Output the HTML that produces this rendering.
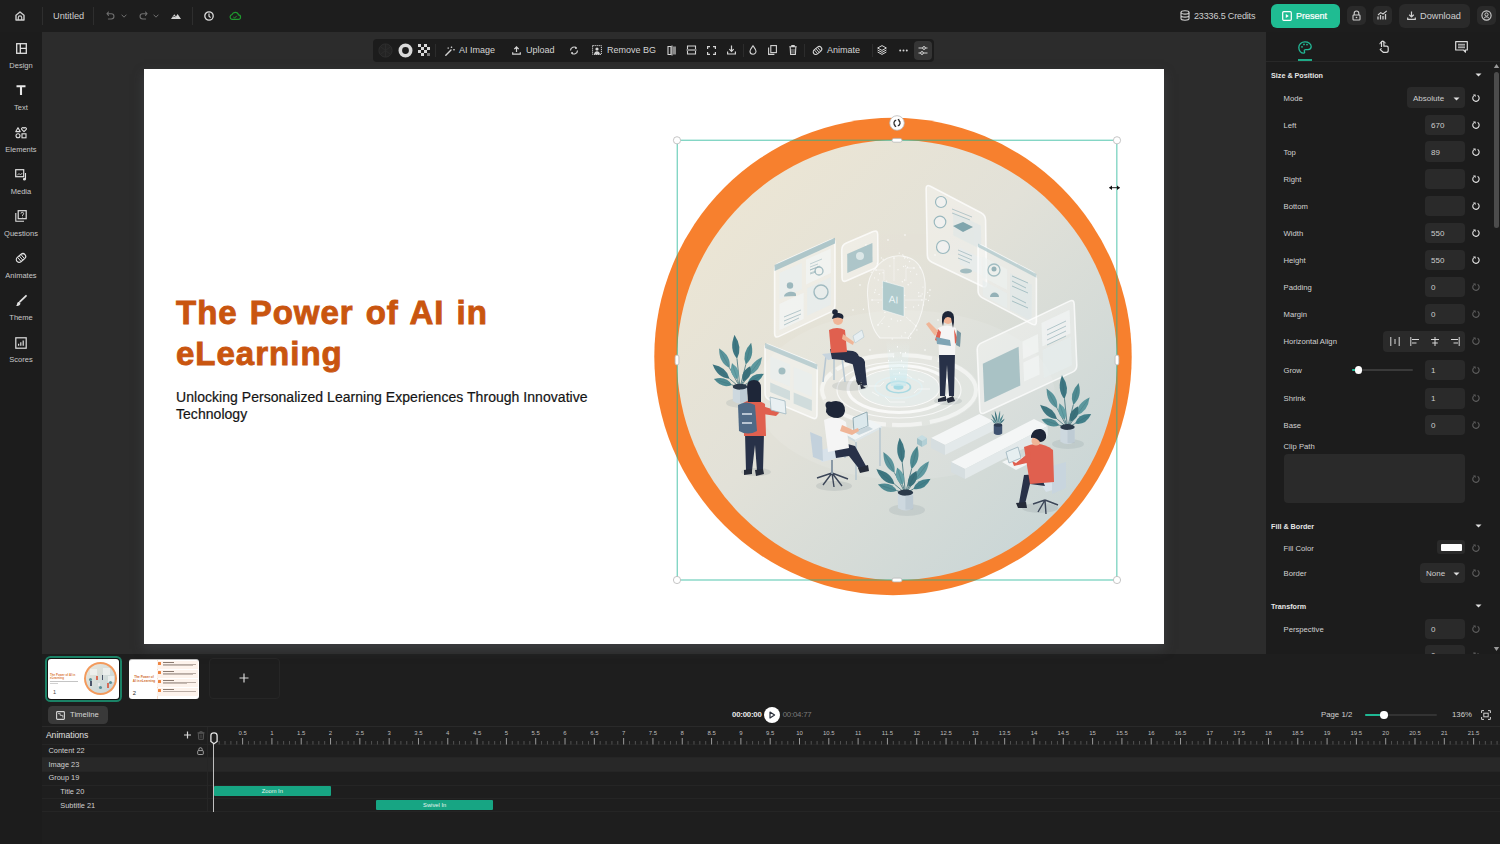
<!DOCTYPE html>
<html><head><meta charset="utf-8">
<style>
*{margin:0;padding:0;box-sizing:border-box}
html,body{width:1500px;height:844px;overflow:hidden;background:#1e1e1e;font-family:"Liberation Sans",sans-serif;color:#ddd}
.a{position:absolute}
.t{position:absolute;white-space:nowrap;line-height:1}
svg{position:absolute;overflow:visible}
#top{left:0;top:0;width:1500px;height:32px;background:#1d1d1d}
#side{left:0;top:32px;width:42px;height:812px;background:#1c1c1c}
#canvas{left:42px;top:32px;width:1224px;height:622px;background:#2c2c2c}
#rp{left:1266px;top:32px;width:234px;height:622px;background:#1c1c1c}
#bottom{left:42px;top:654px;width:1458px;height:190px;background:#1e1e1e}
.sep{position:absolute;width:1px;background:#2e2e2e}
.side-l{position:absolute;left:0;width:42px;text-align:center;font-size:7.5px;color:#c8c8c8;line-height:1}
.tbt{font-size:9px;color:#d4d4d4}
.rph{font-size:7.2px;font-weight:bold;color:#e6e6e6}
.rpl{font-size:7.7px;color:#d2d2d2}
.rpv{font-size:8px;color:#cdcdcd}
.ib{background:#2a2a2a;border-radius:4px}
</style></head><body>
<!-- TOP BAR -->
<div id="top" class="a"></div>

<!-- top bar items -->
<svg style="left:15px;top:11px" width="10" height="10" viewBox="0 0 10 10"><path d="M1 4.2L5 1 9 4.2V9H1Z" fill="none" stroke="#cfcfcf" stroke-width="1.4" stroke-linejoin="round"/><path d="M3.3 9V6.6a1.7 1.7 0 0 1 3.4 0V9" fill="none" stroke="#cfcfcf" stroke-width="1.2"/></svg>
<div class="sep" style="left:42px;top:7px;height:18px"></div>
<div class="t" style="left:53px;top:11.5px;font-size:9.2px;color:#cfcfcf">Untitled</div>
<div class="sep" style="left:93px;top:7px;height:18px"></div>
<svg style="left:106px;top:11px" width="9" height="9" viewBox="0 0 9 9"><path d="M2.5 1 1 2.7 2.5 4.3M1.2 2.7H5.3a2.6 2.6 0 0 1 0 5.3H2.4" fill="none" stroke="#6f6f6f" stroke-width="1.1" stroke-linecap="round" stroke-linejoin="round"/></svg>
<svg style="left:121px;top:14px" width="6" height="4" viewBox="0 0 6 4"><path d="M.6.7 3 3.2 5.4.7" fill="none" stroke="#6f6f6f" stroke-width="1"/></svg>
<svg style="left:139px;top:11px" width="9" height="9" viewBox="0 0 9 9"><path d="M6.5 1 8 2.7 6.5 4.3M7.8 2.7H3.7a2.6 2.6 0 0 0 0 5.3H6.6" fill="none" stroke="#6f6f6f" stroke-width="1.1" stroke-linecap="round" stroke-linejoin="round"/></svg>
<svg style="left:153px;top:14px" width="6" height="4" viewBox="0 0 6 4"><path d="M.6.7 3 3.2 5.4.7" fill="none" stroke="#6f6f6f" stroke-width="1"/></svg>
<svg style="left:171px;top:13px" width="10" height="6" viewBox="0 0 10 6"><path d="M0 6 3.3 1.2 5 3.6 6.6 1 10 6Z" fill="#d6d6d6"/><path d="M2.2 4.2 3.3 3 4.3 4.2" fill="none" stroke="#1d1d1d" stroke-width=".7"/></svg>
<div class="sep" style="left:192px;top:7px;height:18px"></div>
<svg style="left:204px;top:11px" width="10" height="10" viewBox="0 0 10 10"><circle cx="5" cy="5" r="4.2" fill="none" stroke="#dcdcdc" stroke-width="1.3"/><path d="M5 2.6V5.2L6.6 6.6" fill="none" stroke="#dcdcdc" stroke-width="1.2"/></svg>
<svg style="left:229px;top:12px" width="12" height="8" viewBox="0 0 12 8"><path d="M3 7.3H9.2a2.2 2.2 0 0 0 .3-4.4A3.4 3.4 0 0 0 3 2.6 2.4 2.4 0 0 0 3 7.3Z" fill="none" stroke="#1f9a2e" stroke-width="1.2"/><path d="M4.3 5 5.6 6 7.8 3.8" fill="none" stroke="#1f9a2e" stroke-width="1"/></svg>

<svg style="left:1180px;top:10px" width="10" height="11" viewBox="0 0 10 11"><ellipse cx="5" cy="2.4" rx="4" ry="1.7" fill="none" stroke="#d0d0d0" stroke-width="1.1"/><path d="M1 2.4V8.6C1 9.6 2.8 10.3 5 10.3S9 9.6 9 8.6V2.4M1 5.4C1 6.4 2.8 7.1 5 7.1S9 6.4 9 5.4" fill="none" stroke="#d0d0d0" stroke-width="1.1"/></svg>
<div class="t" id="credits" style="left:1194px;top:12px;font-size:9px;letter-spacing:-0.15px;color:#cfcfcf">23336.5 Credits</div>
<div class="a" style="left:1271px;top:4px;width:69px;height:23.5px;background:#1fbc92;border-radius:6px"></div>
<svg style="left:1282px;top:11px" width="10" height="10" viewBox="0 0 10 10"><rect x=".7" y=".7" width="8.6" height="8.6" rx="1" fill="none" stroke="#fff" stroke-width="1.2"/><path d="M3.8 3 6.8 5 3.8 7Z" fill="#fff"/></svg>
<div class="t" style="left:1296px;top:11.5px;font-size:9px;color:#fff;-webkit-text-stroke:0.2px #fff">Present</div>
<div class="a" style="left:1347px;top:6px;width:19px;height:19px;background:#2a2a2a;border-radius:5px"></div>
<svg style="left:1352px;top:10px" width="9" height="11" viewBox="0 0 9 11"><path d="M2.2 5V3.3a2.3 2.3 0 0 1 4.6 0V5" fill="none" stroke="#d0d0d0" stroke-width="1.1"/><rect x="1" y="5" width="7" height="5" rx=".8" fill="none" stroke="#d0d0d0" stroke-width="1.1"/><circle cx="4.5" cy="7.5" r=".8" fill="#d0d0d0"/></svg>
<div class="a" style="left:1373px;top:6px;width:19px;height:19px;background:#2a2a2a;border-radius:5px"></div>
<svg style="left:1377px;top:10px" width="11" height="10" viewBox="0 0 11 10"><path d="M1 9.5V6.5M3.5 9.5V5M6 9.5V6M8.5 9.5V4" stroke="#d0d0d0" stroke-width="1.3"/><path d="M1 5 3.7 2.6 6 4 9.8 .8" fill="none" stroke="#d0d0d0" stroke-width="1.1"/></svg>
<div class="a" style="left:1399px;top:4px;width:71px;height:23.5px;background:#2a2a2a;border-radius:6px"></div>
<svg style="left:1407px;top:11px" width="9" height="9" viewBox="0 0 9 9"><path d="M4.5.5V6M2.2 3.8 4.5 6 6.8 3.8M.7 6.5V8.3H8.3V6.5" fill="none" stroke="#d0d0d0" stroke-width="1.2"/></svg>
<div class="t" style="left:1420px;top:12px;font-size:9.2px;color:#d0d0d0">Download</div>
<div class="a" style="left:1477px;top:6px;width:19px;height:19px;background:#2a2a2a;border-radius:5px"></div>
<svg style="left:1481px;top:10px" width="11" height="11" viewBox="0 0 11 11"><circle cx="5.5" cy="5.5" r="4.6" fill="none" stroke="#d0d0d0" stroke-width="1.1"/><circle cx="5.5" cy="4.5" r="1.6" fill="none" stroke="#d0d0d0" stroke-width="1"/><path d="M2.8 8.6C3.4 7.3 4.4 6.9 5.5 6.9S7.6 7.3 8.2 8.6" fill="none" stroke="#d0d0d0" stroke-width="1"/></svg>
<div id="side" class="a"></div>
<div id="canvas" class="a"></div>
<div id="rp" class="a"></div>
<div id="bottom" class="a"></div>

<!-- slide -->
<div class="a" id="slide" style="left:144px;top:69px;width:1020px;height:575px;background:#fff;box-shadow:0 5px 10px rgba(72,74,80,.55)"></div>
<!-- slide content -->
<div class="a" style="left:176px;top:292.3px;font-size:33px;line-height:41px;font-weight:bold;color:#c9550f;-webkit-text-stroke:0.9px #c9550f;letter-spacing:1.0px;word-spacing:1.8px;white-space:nowrap">The Power of AI in<br>eLearning</div>
<div class="a" style="left:176px;top:389.1px;font-size:14px;line-height:17.3px;color:#141414;-webkit-text-stroke:0.2px #141414;letter-spacing:0.04px;white-space:nowrap">Unlocking Personalized Learning Experiences Through Innovative<br>Technology</div>
<svg style="left:600px;top:100px" width="560" height="520" viewBox="600 100 560 520">
<defs>
<linearGradient id="bgg" x1="0" y1="0" x2="1" y2="1"><stop offset="0" stop-color="#efe7d3"/><stop offset=".45" stop-color="#e2e1d8"/><stop offset="1" stop-color="#c3d3d6"/></linearGradient>
<clipPath id="cc"><circle cx="897" cy="360" r="220"/></clipPath>
</defs>
<circle cx="893" cy="356.5" r="238.7" fill="#f7802e"/>
<circle cx="897" cy="360" r="220" fill="url(#bgg)"/>
<g clip-path="url(#cc)" id="illus"><ellipse cx="905" cy="395" rx="150" ry="85" fill="#ffffff" opacity=".10"/>
<ellipse cx="899" cy="390" rx="80" ry="38" fill="#ffffff" opacity=".16"/>
<g fill="none" stroke="#ffffff">
<ellipse cx="899" cy="390" rx="77" ry="35" stroke-width="4" stroke-opacity=".55" stroke-dasharray="60 8 30 6"/>
<ellipse cx="899" cy="390" rx="62" ry="28" stroke-width="1.2" stroke-opacity=".7"/>
<ellipse cx="899" cy="389" rx="51" ry="23.5" stroke-width="3" stroke-opacity=".75"/>
<ellipse cx="899" cy="388" rx="40.5" ry="19" stroke-width="1.2" stroke-opacity=".8"/>
<ellipse cx="898.5" cy="387.5" rx="23.5" ry="10.7" stroke-width="1.5" stroke="#d9f0f3" stroke-opacity=".9"/>
</g>
<ellipse cx="899" cy="388" rx="40" ry="18.5" fill="#e8f0f0" opacity=".55"/>
<g stroke="#ffffff" stroke-width=".8" opacity=".7" fill="none"><path d="M868 386H880L884 382M930 389H918L914 393M885 397 890 402H905M912 378 906 374H893M872 392 879 396M924 382 918 379"/></g>
<ellipse cx="898.5" cy="387" rx="12" ry="5.8" fill="none" stroke="#9fd6e0" stroke-width="1.6" opacity=".85"/>
<ellipse cx="898.5" cy="387" rx="5" ry="2.8" fill="#9ad7e2" opacity=".9"/>
<defs><linearGradient id="glw" x1="0" y1="0" x2="0" y2="1"><stop offset="0" stop-color="#f0fafb" stop-opacity="0"/><stop offset="1" stop-color="#c4e8ee" stop-opacity=".7"/></linearGradient></defs>
<polygon points="886,340 910,340 906,386 891,386" fill="url(#glw)"/>
<g fill="#ffffff" opacity=".85"><rect x="889" y="350" width="1" height="1.6"/><rect x="893" y="356" width="1" height="1.6"/><rect x="897" y="346" width="1" height="1.6"/><rect x="901" y="360" width="1" height="1.6"/><rect x="905" y="352" width="1" height="1.6"/><rect x="891" y="368" width="1" height="1.6"/><rect x="899" y="372" width="1" height="1.6"/><rect x="903" y="366" width="1" height="1.6"/><rect x="895" y="378" width="1" height="1.6"/><rect x="907" y="374" width="1" height="1.6"/><rect x="888" y="360" width="1" height="1.6"/><rect x="900" y="352" width="1" height="1.6"/></g>
<path d="M868 300C864 270 885 254 902 256 922 258 928 278 924 300 922 318 915 330 908 338L880 338C872 330 869 318 868 300Z" fill="#ffffff" fill-opacity=".18" stroke="#ffffff" stroke-opacity=".65" stroke-width="1.1"/>
<g stroke="#ffffff" stroke-opacity=".55" stroke-width=".7" fill="none"><path d="M876 270H884V280M914 268H906V281M872 300H882M922 300H905M878 325L885 316M916 326 906 317M894 258V281"/></g>
<g fill="#ffffff" opacity=".6"><circle cx="876" cy="270" r=".9"/><circle cx="914" cy="268" r=".9"/><circle cx="872" cy="300" r=".9"/><circle cx="922" cy="300" r=".9"/><circle cx="878" cy="325" r=".9"/><circle cx="916" cy="326" r=".9"/><circle cx="894" cy="258" r=".9"/><circle cx="860" cy="285" r=".9"/><circle cx="930" cy="290" r=".9"/><circle cx="866" cy="245" r=".9"/><circle cx="935" cy="255" r=".9"/><circle cx="853" cy="310" r=".9"/><circle cx="938" cy="320" r=".9"/><circle cx="888" cy="240" r=".9"/><circle cx="905" cy="235" r=".9"/><circle cx="870" cy="350" r=".9"/><circle cx="925" cy="350" r=".9"/></g>
<g fill="#ffffff" opacity=".75"><circle cx="878.2" cy="302.6" r=".7"/><circle cx="887.2" cy="308.2" r=".7"/><circle cx="904.5" cy="258.1" r=".7"/><circle cx="879.6" cy="273.8" r=".7"/><circle cx="929.7" cy="295.7" r=".7"/><circle cx="918.9" cy="296.3" r=".7"/><circle cx="905.5" cy="266.0" r=".7"/><circle cx="905.2" cy="332.7" r=".7"/><circle cx="897.6" cy="320.9" r=".7"/><circle cx="907.7" cy="258.0" r=".7"/><circle cx="913.6" cy="307.0" r=".7"/><circle cx="920.9" cy="296.0" r=".7"/><circle cx="910.9" cy="333.7" r=".7"/><circle cx="910.6" cy="337.7" r=".7"/><circle cx="888.9" cy="326.5" r=".7"/><circle cx="892.2" cy="339.0" r=".7"/><circle cx="871.2" cy="272.2" r=".7"/><circle cx="927.7" cy="292.6" r=".7"/><circle cx="904.6" cy="280.0" r=".7"/><circle cx="896.5" cy="287.9" r=".7"/><circle cx="885.9" cy="306.4" r=".7"/><circle cx="901.7" cy="336.1" r=".7"/><circle cx="908.4" cy="338.4" r=".7"/><circle cx="907.6" cy="267.2" r=".7"/><circle cx="923.5" cy="304.9" r=".7"/><circle cx="910.5" cy="271.6" r=".7"/><circle cx="918.5" cy="305.3" r=".7"/><circle cx="881.4" cy="257.9" r=".7"/><circle cx="889.9" cy="266.0" r=".7"/><circle cx="882.0" cy="323.5" r=".7"/><circle cx="903.8" cy="256.2" r=".7"/><circle cx="910.9" cy="282.8" r=".7"/><circle cx="883.1" cy="259.2" r=".7"/><circle cx="902.8" cy="254.9" r=".7"/><circle cx="875.4" cy="289.9" r=".7"/><circle cx="903.5" cy="266.5" r=".7"/><circle cx="923.0" cy="287.1" r=".7"/><circle cx="893.3" cy="300.4" r=".7"/><circle cx="905.8" cy="307.4" r=".7"/><circle cx="900.0" cy="309.7" r=".7"/><circle cx="926.0" cy="299.2" r=".7"/><circle cx="891.3" cy="319.0" r=".7"/><circle cx="878.2" cy="280.0" r=".7"/><circle cx="928.5" cy="300.5" r=".7"/><circle cx="899.3" cy="253.1" r=".7"/><circle cx="890.2" cy="305.9" r=".7"/><circle cx="863.4" cy="309.3" r=".7"/><circle cx="905.0" cy="257.6" r=".7"/><circle cx="904.7" cy="295.4" r=".7"/><circle cx="908.2" cy="284.8" r=".7"/><circle cx="910.1" cy="320.6" r=".7"/><circle cx="879.1" cy="294.4" r=".7"/><circle cx="902.3" cy="281.8" r=".7"/><circle cx="886.7" cy="281.1" r=".7"/><circle cx="887.1" cy="307.4" r=".7"/><circle cx="882.4" cy="287.1" r=".7"/><circle cx="900.7" cy="320.4" r=".7"/><circle cx="883.1" cy="272.7" r=".7"/><circle cx="916.7" cy="274.2" r=".7"/><circle cx="874.7" cy="292.5" r=".7"/><circle cx="909.5" cy="261.5" r=".7"/><circle cx="883.9" cy="283.0" r=".7"/><circle cx="918.7" cy="292.8" r=".7"/><circle cx="920.2" cy="267.7" r=".7"/><circle cx="884.9" cy="312.5" r=".7"/><circle cx="922.2" cy="294.0" r=".7"/><circle cx="877.3" cy="263.2" r=".7"/><circle cx="898.0" cy="269.7" r=".7"/><circle cx="916.9" cy="330.0" r=".7"/><circle cx="874.5" cy="277.9" r=".7"/></g>
<polygon points="882.6,281.0 904.0,287.0 904.0,316.5 882.6,310.0" fill="#a9c6ca" fill-opacity="0.9" stroke="#ffffff" stroke-width="0.8" stroke-opacity="0.6" stroke-linejoin="round" />
<text x="893.5" y="302" font-family="Liberation Sans" font-size="10" fill="#eef6f7" text-anchor="middle" transform="skewY(8) translate(0,-124.6)">AI</text>
<path d="M774.6 270.0Q774.6 265.0 779.2 262.9L830.4 239.9Q835.0 237.8 835.0 242.8L835.0 305.0Q835.0 310.0 830.5 312.1L779.1 336.4Q774.6 338.5 774.6 333.5Z" fill="#ffffff" fill-opacity=".36" stroke="#ffffff" stroke-width="1.6" stroke-opacity=".75"/>
<polygon points="774.6,265.0 835.0,237.8 835.0,243.6 774.6,270.9" fill="#9dbcc2" fill-opacity="0.8" />
<polygon points="779.4,273.1 801.8,263.0 801.8,289.2 779.4,299.5" fill="#e9eeee" fill-opacity="0.8" />
<polygon points="806.0,259.6 830.8,248.4 830.8,273.0 806.0,284.4" fill="#f1f3f2" fill-opacity="0.85" />
<polygon points="779.4,303.9 803.6,292.8 803.6,319.0 779.4,330.3" fill="#f1f3f2" fill-opacity="0.85" />
<polygon points="807.2,288.2 830.8,277.3 830.8,304.8 807.2,315.8" fill="#e6ecec" fill-opacity="0.8" />
<circle cx="790" cy="285.5" r="3.2" fill="#8eaeb5" opacity=".85"/><path d="M784 296.5C784 291 796 290 796 294.5V296Z" fill="#8eaeb5" opacity=".85"/>
<g stroke="#a3bcc2" stroke-width=".8" opacity=".8"><path d="M810 264 822 259M810 267 818 264M810 270 820 266M810 273 816 271"/></g>
<circle cx="821" cy="292" r="7" fill="none" stroke="#8eaeb5" stroke-width="1.4" opacity=".8"/>
<circle cx="819" cy="271" r="4" fill="none" stroke="#8eaeb5" stroke-width="1.3" opacity=".8"/>
<g stroke="#9db7bd" stroke-width=".9" opacity=".8"><path d="M784 317 801 310M784 321 801 314M784 325 799 318"/><path d="M810 270 818 267M810 274 816 272"/></g>
<path d="M841.7 249.9Q841.7 244.9 846.3 242.9L873.1 231.5Q877.7 229.5 877.7 234.5L878.0 262.0Q878.0 267.0 873.4 269.0L846.6 280.8Q842.0 282.8 842.0 277.8Z" fill="#ffffff" fill-opacity=".36" stroke="#ffffff" stroke-width="1.6" stroke-opacity=".75"/>
<polygon points="847.2,253.9 872.4,243.1 872.5,261.9 847.3,272.9" fill="#97b8bf" fill-opacity="0.75" />
<circle cx="860" cy="256" r="4" fill="#e7efef" opacity=".8"/>
<path d="M765.0 348.0Q765.0 343.0 769.6 344.9L812.7 362.6Q817.3 364.5 817.3 369.5L817.0 415.0Q817.0 420.0 812.4 418.1L769.6 399.9Q765.0 398.0 765.0 393.0Z" fill="#ffffff" fill-opacity=".36" stroke="#ffffff" stroke-width="1.6" stroke-opacity=".75"/>
<polygon points="765.0,343.0 817.3,364.5 817.3,369.5 765.0,347.9" fill="#a6c2c7" fill-opacity="0.7" />
<polygon points="770.2,356.2 790.1,364.4 790.0,386.5 770.2,378.2" fill="#e8eeee" fill-opacity="0.7" />
<polygon points="793.7,367.0 812.0,374.5 811.9,396.7 793.7,389.1" fill="#e8eeee" fill-opacity="0.7" />
<polygon points="770.2,382.6 790.0,390.9 790.0,400.3 770.2,391.9" fill="#bcd0d3" fill-opacity="0.6" />
<polygon points="793.7,392.4 811.9,400.1 811.8,411.1 793.6,403.5" fill="#bcd0d3" fill-opacity="0.6" />
<circle cx="782" cy="371" r="3.5" fill="#8fb0b7" opacity=".8"/>
<path d="M926.1 189.0Q926.0 184.0 930.4 186.3L981.1 212.7Q985.5 215.0 985.6 220.0L986.5 283.5Q986.6 288.5 982.1 286.3L931.9 262.2Q927.4 260.0 927.3 255.0Z" fill="#ffffff" fill-opacity=".36" stroke="#ffffff" stroke-width="1.6" stroke-opacity=".75"/>
<polygon points="953.0,211.4 980.9,225.8 981.3,249.4 953.4,235.4" fill="#dfe7e7" fill-opacity="0.7" />
<polygon points="959.5,247.3 981.4,258.2 981.7,275.2 959.8,264.5" fill="#e7ecec" fill-opacity="0.7" />
<circle cx="941" cy="202" r="5.5" fill="#f2f4f3" fill-opacity=".7" stroke="#9ab8be" stroke-width="1.2"/>
<circle cx="940" cy="222" r="5.8" fill="#f2f4f3" fill-opacity=".7" stroke="#9ab8be" stroke-width="1.2"/>
<circle cx="943" cy="247" r="6.5" fill="#f2f4f3" fill-opacity=".7" stroke="#9ab8be" stroke-width="1.2"/>
<path d="M953 226 963 222 973 227 963 232Z" fill="#6f9aa2" opacity=".85"/>
<g stroke="#9db7bd" stroke-width=".9" opacity=".8"><path d="M952 209 972 217M952 213 970 220M958 250 972 256M958 254 972 260M958 258 970 263"/></g>
<ellipse cx="966" cy="271" rx="6" ry="2.5" fill="#90b0b6" opacity=".8"/>
<path d="M978.0 248.5Q978.0 243.5 982.4 245.8L1032.0 271.7Q1036.4 274.0 1036.4 279.0L1036.4 321.4Q1036.4 326.4 1032.0 324.1L982.4 297.9Q978.0 295.6 978.0 290.6Z" fill="#ffffff" fill-opacity=".36" stroke="#ffffff" stroke-width="1.6" stroke-opacity=".75"/>
<polygon points="978.0,243.5 1036.4,274.0 1036.4,277.7 978.0,247.1" fill="#a9c4c9" fill-opacity="0.7" />
<polygon points="982.7,256.4 1007.2,269.2 1007.2,290.1 982.7,277.2" fill="#edf1f0" fill-opacity="0.6" />
<polygon points="1010.1,273.3 1031.7,284.7 1031.7,321.3 1010.1,309.9" fill="#dde6e7" fill-opacity="0.6" />
<polygon points="982.7,280.3 1007.2,293.2 1007.2,308.4 982.7,295.5" fill="#e6ecec" fill-opacity="0.6" />
<circle cx="994" cy="270" r="6" fill="none" stroke="#8fb0b6" stroke-width="1.3" opacity=".8"/>
<circle cx="994" cy="269" r="2.5" fill="#7fa3aa" opacity=".8"/>
<path d="M990 297C990 291 999 291 999 297Z" fill="#7fa3aa" opacity=".8"/>
<g stroke="#8fb0b6" stroke-width="1" opacity=".7"><path d="M1012 276 1028 283M1012 281 1026 288M1012 286 1028 293M1012 296 1026 303M1012 301 1028 308"/></g>
<path d="M977.2 350.0Q977.0 345.0 981.5 342.9L1069.5 301.1Q1074.0 299.0 1074.2 304.0L1076.8 365.0Q1077.0 370.0 1072.5 372.1L984.5 412.9Q980.0 415.0 979.8 410.0Z" fill="#ffffff" fill-opacity=".36" stroke="#ffffff" stroke-width="1.6" stroke-opacity=".75"/>
<polygon points="982.8,363.7 1018.6,346.8 1020.3,385.5 984.4,402.2" fill="#8fb1b7" fill-opacity="0.7" />
<polygon points="1022.4,341.5 1037.9,334.1 1038.6,351.8 1023.1,359.1" fill="#f1f4f3" fill-opacity="0.8" />
<polygon points="1023.3,362.6 1038.8,355.3 1039.6,374.4 1024.1,381.6" fill="#f1f4f3" fill-opacity="0.8" />
<polygon points="1041.4,323.1 1069.5,309.8 1070.5,333.2 1042.4,346.4" fill="#f0f3f2" fill-opacity="0.8" />
<polygon points="1042.5,350.0 1070.7,336.8 1071.9,365.2 1043.7,378.2" fill="#e6ecec" fill-opacity="0.7" />
<g stroke="#9ab6bc" stroke-width=".9" opacity=".8"><path d="M1047 330 1066 321M1047 335 1066 326M1047 340 1066 331M1047 345 1066 336"/></g>
<ellipse cx="742" cy="403" rx="16" ry="5" fill="#7f8f96" opacity=".18"/>
<g>
<path d="M740.0 387.6L731.9 384.9" stroke="#3d6f78" stroke-width="0.77"/>
<path d="M731.9 384.9Q726.1 375.5 714.1 379.1Q721.7 389.1 731.9 384.9Z" fill="#4f8a92"/>
<path d="M731.9 384.9L714.1 379.1" stroke="#2f5f68" stroke-width="0.38" opacity=".6"/>
<path d="M740.0 387.6L729.6 378.8" stroke="#3d6f78" stroke-width="0.77"/>
<path d="M729.6 378.8Q726.6 366.9 712.7 364.6Q717.4 377.9 729.6 378.8Z" fill="#3f7680"/>
<path d="M729.6 378.8L712.7 364.6" stroke="#2f5f68" stroke-width="0.38" opacity=".6"/>
<path d="M740.0 387.6L729.6 368.0" stroke="#3d6f78" stroke-width="0.77"/>
<path d="M729.6 368.0Q731.3 355.9 719.2 348.5Q718.7 362.6 729.6 368.0Z" fill="#5b949b"/>
<path d="M729.6 368.0L719.2 348.5" stroke="#2f5f68" stroke-width="0.38" opacity=".6"/>
<path d="M740.0 387.6L737.0 358.8" stroke="#3d6f78" stroke-width="0.77"/>
<path d="M737.0 358.8Q743.0 347.4 734.5 335.1Q728.8 348.9 737.0 358.8Z" fill="#3e7782"/>
<path d="M737.0 358.8L734.5 335.1" stroke="#2f5f68" stroke-width="0.38" opacity=".6"/>
<path d="M740.0 387.6L745.8 364.5" stroke="#3d6f78" stroke-width="0.77"/>
<path d="M745.8 364.5Q755.1 356.5 751.1 343.0Q741.2 353.1 745.8 364.5Z" fill="#4f8b92"/>
<path d="M745.8 364.5L751.1 343.0" stroke="#2f5f68" stroke-width="0.38" opacity=".6"/>
<path d="M740.0 387.6L749.0 375.2" stroke="#3d6f78" stroke-width="0.77"/>
<path d="M749.0 375.2Q760.6 371.3 762.0 357.3Q749.1 362.9 749.0 375.2Z" fill="#5e989f"/>
<path d="M749.0 375.2L762.0 357.3" stroke="#2f5f68" stroke-width="0.38" opacity=".6"/>
<path d="M740.0 387.6L747.4 383.3" stroke="#3d6f78" stroke-width="0.77"/>
<path d="M747.4 383.3Q758.2 385.3 763.6 373.9Q751.1 372.9 747.4 383.3Z" fill="#43808a"/>
<path d="M747.4 383.3L763.6 373.9" stroke="#2f5f68" stroke-width="0.38" opacity=".6"/>
<path d="M740.0 387.6L737.4 379.5" stroke="#3d6f78" stroke-width="0.77"/>
<path d="M737.4 379.5Q741.8 370.0 732.1 363.3Q728.2 374.4 737.4 379.5Z" fill="#64a0a6"/>
<path d="M737.4 379.5L732.1 363.3" stroke="#2f5f68" stroke-width="0.38" opacity=".6"/>
<path d="M740.0 387.6L743.0 381.4" stroke="#3d6f78" stroke-width="0.77"/>
<path d="M743.0 381.4Q752.8 377.7 750.4 366.2Q739.9 371.4 743.0 381.4Z" fill="#3b717b"/>
<path d="M743.0 381.4L750.4 366.2" stroke="#2f5f68" stroke-width="0.38" opacity=".6"/>
</g>
<path d="M732.8 386.7H747.2V401.1Q740.0 406.2 732.8 401.1Z" fill="#cdd8df"/>
<ellipse cx="740.0" cy="386.7" rx="7.2" ry="3.0" fill="#2b3a4a"/>
<path d="M743.6 389.2V402.7" stroke="#aebdc8" stroke-width="7.2" opacity=".45"/>
<ellipse cx="907" cy="510" rx="18" ry="6" fill="#7f8f96" opacity=".18"/>
<g>
<path d="M905.5 493.5L896.9 490.7" stroke="#3d6f78" stroke-width="0.81"/>
<path d="M896.9 490.7Q890.8 480.8 878.1 484.6Q886.1 495.2 896.9 490.7Z" fill="#4f8a92"/>
<path d="M896.9 490.7L878.1 484.6" stroke="#2f5f68" stroke-width="0.41" opacity=".6"/>
<path d="M905.5 493.5L894.5 484.2" stroke="#3d6f78" stroke-width="0.81"/>
<path d="M894.5 484.2Q891.3 471.7 876.5 469.2Q881.5 483.3 894.5 484.2Z" fill="#3f7680"/>
<path d="M894.5 484.2L876.5 469.2" stroke="#2f5f68" stroke-width="0.41" opacity=".6"/>
<path d="M905.5 493.5L894.5 472.8" stroke="#3d6f78" stroke-width="0.81"/>
<path d="M894.5 472.8Q896.2 460.0 883.5 452.2Q882.9 467.1 894.5 472.8Z" fill="#5b949b"/>
<path d="M894.5 472.8L883.5 452.2" stroke="#2f5f68" stroke-width="0.41" opacity=".6"/>
<path d="M905.5 493.5L902.3 463.1" stroke="#3d6f78" stroke-width="0.81"/>
<path d="M902.3 463.1Q908.6 451.0 899.7 438.0Q893.6 452.6 902.3 463.1Z" fill="#3e7782"/>
<path d="M902.3 463.1L899.7 438.0" stroke="#2f5f68" stroke-width="0.41" opacity=".6"/>
<path d="M905.5 493.5L911.6 469.0" stroke="#3d6f78" stroke-width="0.81"/>
<path d="M911.6 469.0Q921.5 460.7 917.3 446.3Q906.8 457.0 911.6 469.0Z" fill="#4f8b92"/>
<path d="M911.6 469.0L917.3 446.3" stroke="#2f5f68" stroke-width="0.41" opacity=".6"/>
<path d="M905.5 493.5L915.0 480.4" stroke="#3d6f78" stroke-width="0.81"/>
<path d="M915.0 480.4Q927.3 476.3 928.8 461.5Q915.1 467.4 915.0 480.4Z" fill="#5e989f"/>
<path d="M915.0 480.4L928.8 461.5" stroke="#2f5f68" stroke-width="0.41" opacity=".6"/>
<path d="M905.5 493.5L913.3 489.0" stroke="#3d6f78" stroke-width="0.81"/>
<path d="M913.3 489.0Q924.8 491.1 930.4 479.1Q917.2 478.0 913.3 489.0Z" fill="#43808a"/>
<path d="M913.3 489.0L930.4 479.1" stroke="#2f5f68" stroke-width="0.41" opacity=".6"/>
<path d="M905.5 493.5L902.7 484.9" stroke="#3d6f78" stroke-width="0.81"/>
<path d="M902.7 484.9Q907.4 474.9 897.2 467.8Q893.0 479.6 902.7 484.9Z" fill="#64a0a6"/>
<path d="M902.7 484.9L897.2 467.8" stroke="#2f5f68" stroke-width="0.41" opacity=".6"/>
<path d="M905.5 493.5L908.7 487.0" stroke="#3d6f78" stroke-width="0.81"/>
<path d="M908.7 487.0Q919.0 483.1 916.5 470.9Q905.4 476.4 908.7 487.0Z" fill="#3b717b"/>
<path d="M908.7 487.0L916.5 470.9" stroke="#2f5f68" stroke-width="0.41" opacity=".6"/>
</g>
<path d="M897.9 492.6H913.1V507.9Q905.5 513.3 897.9 507.9Z" fill="#cdd8df"/>
<ellipse cx="905.5" cy="492.6" rx="7.7" ry="3.1" fill="#2b3a4a"/>
<path d="M909.3 495.3V509.6" stroke="#aebdc8" stroke-width="7.7" opacity=".45"/>
<ellipse cx="1068" cy="444" rx="16" ry="5" fill="#7f8f96" opacity=".18"/>
<g>
<path d="M1067.5 427.9L1059.4 425.2" stroke="#3d6f78" stroke-width="0.77"/>
<path d="M1059.4 425.2Q1053.6 415.8 1041.6 419.4Q1049.2 429.4 1059.4 425.2Z" fill="#4f8a92"/>
<path d="M1059.4 425.2L1041.6 419.4" stroke="#2f5f68" stroke-width="0.38" opacity=".6"/>
<path d="M1067.5 427.9L1057.1 419.1" stroke="#3d6f78" stroke-width="0.77"/>
<path d="M1057.1 419.1Q1054.1 407.2 1040.2 404.9Q1044.9 418.2 1057.1 419.1Z" fill="#3f7680"/>
<path d="M1057.1 419.1L1040.2 404.9" stroke="#2f5f68" stroke-width="0.38" opacity=".6"/>
<path d="M1067.5 427.9L1057.1 408.3" stroke="#3d6f78" stroke-width="0.77"/>
<path d="M1057.1 408.3Q1058.8 396.2 1046.7 388.8Q1046.2 402.9 1057.1 408.3Z" fill="#5b949b"/>
<path d="M1057.1 408.3L1046.7 388.8" stroke="#2f5f68" stroke-width="0.38" opacity=".6"/>
<path d="M1067.5 427.9L1064.5 399.1" stroke="#3d6f78" stroke-width="0.77"/>
<path d="M1064.5 399.1Q1070.5 387.7 1062.0 375.4Q1056.3 389.2 1064.5 399.1Z" fill="#3e7782"/>
<path d="M1064.5 399.1L1062.0 375.4" stroke="#2f5f68" stroke-width="0.38" opacity=".6"/>
<path d="M1067.5 427.9L1073.3 404.8" stroke="#3d6f78" stroke-width="0.77"/>
<path d="M1073.3 404.8Q1082.6 396.8 1078.6 383.3Q1068.7 393.4 1073.3 404.8Z" fill="#4f8b92"/>
<path d="M1073.3 404.8L1078.6 383.3" stroke="#2f5f68" stroke-width="0.38" opacity=".6"/>
<path d="M1067.5 427.9L1076.5 415.5" stroke="#3d6f78" stroke-width="0.77"/>
<path d="M1076.5 415.5Q1088.1 411.6 1089.5 397.6Q1076.6 403.2 1076.5 415.5Z" fill="#5e989f"/>
<path d="M1076.5 415.5L1089.5 397.6" stroke="#2f5f68" stroke-width="0.38" opacity=".6"/>
<path d="M1067.5 427.9L1074.9 423.6" stroke="#3d6f78" stroke-width="0.77"/>
<path d="M1074.9 423.6Q1085.7 425.6 1091.1 414.2Q1078.6 413.2 1074.9 423.6Z" fill="#43808a"/>
<path d="M1074.9 423.6L1091.1 414.2" stroke="#2f5f68" stroke-width="0.38" opacity=".6"/>
<path d="M1067.5 427.9L1064.9 419.8" stroke="#3d6f78" stroke-width="0.77"/>
<path d="M1064.9 419.8Q1069.3 410.3 1059.6 403.6Q1055.7 414.7 1064.9 419.8Z" fill="#64a0a6"/>
<path d="M1064.9 419.8L1059.6 403.6" stroke="#2f5f68" stroke-width="0.38" opacity=".6"/>
<path d="M1067.5 427.9L1070.5 421.7" stroke="#3d6f78" stroke-width="0.77"/>
<path d="M1070.5 421.7Q1080.3 418.0 1077.9 406.5Q1067.4 411.7 1070.5 421.7Z" fill="#3b717b"/>
<path d="M1070.5 421.7L1077.9 406.5" stroke="#2f5f68" stroke-width="0.38" opacity=".6"/>
</g>
<path d="M1060.3 427.0H1074.7V441.4Q1067.5 446.6 1060.3 441.4Z" fill="#cdd8df"/>
<ellipse cx="1067.5" cy="427.0" rx="7.2" ry="3.0" fill="#2b3a4a"/>
<path d="M1071.1 429.6V443.0" stroke="#aebdc8" stroke-width="7.2" opacity=".45"/>
<g>
<path d="M998.0 425.5L997.0 423.8" stroke="#3d6f78" stroke-width="0.45"/>
<path d="M997.0 423.8Q996.0 418.7 991.5 414.2Q993.1 420.3 997.0 423.8Z" fill="#4a8189"/>
<path d="M997.0 423.8L991.5 414.2" stroke="#2f5f68" stroke-width="0.23" opacity=".6"/>
<path d="M998.0 425.5L997.6 423.5" stroke="#3d6f78" stroke-width="0.45"/>
<path d="M997.6 423.5Q998.0 417.5 994.9 410.8Q994.8 418.2 997.6 423.5Z" fill="#3f7680"/>
<path d="M997.6 423.5L994.9 410.8" stroke="#2f5f68" stroke-width="0.23" opacity=".6"/>
<path d="M998.0 425.5L998.3 423.5" stroke="#3d6f78" stroke-width="0.45"/>
<path d="M998.3 423.5Q1000.7 418.2 1000.0 411.1Q997.4 417.7 998.3 423.5Z" fill="#5b949b"/>
<path d="M998.3 423.5L1000.0 411.1" stroke="#2f5f68" stroke-width="0.23" opacity=".6"/>
<path d="M998.0 425.5L998.9 423.7" stroke="#3d6f78" stroke-width="0.45"/>
<path d="M998.9 423.7Q1002.4 420.2 1003.5 414.3Q999.5 418.7 998.9 423.7Z" fill="#4f8b92"/>
<path d="M998.9 423.7L1003.5 414.3" stroke="#2f5f68" stroke-width="0.23" opacity=".6"/>
<path d="M998.0 425.5L996.9 424.5" stroke="#3d6f78" stroke-width="0.45"/>
<path d="M996.9 424.5Q995.3 420.9 990.9 419.1Q993.1 423.3 996.9 424.5Z" fill="#5a9198"/>
<path d="M996.9 424.5L990.9 419.1" stroke="#2f5f68" stroke-width="0.23" opacity=".6"/>
<path d="M998.0 425.5L999.0 424.4" stroke="#3d6f78" stroke-width="0.45"/>
<path d="M999.0 424.4Q1002.7 423.0 1004.6 418.7Q1000.4 420.7 999.0 424.4Z" fill="#3e7782"/>
<path d="M999.0 424.4L1004.6 418.7" stroke="#2f5f68" stroke-width="0.23" opacity=".6"/>
</g>
<path d="M993.8 425.0H1002.2V433.5Q998.0 436.5 993.8 433.5Z" fill="#3f5270"/>
<ellipse cx="998.0" cy="425.0" rx="4.2" ry="1.8" fill="#2d3b52"/>
<polygon points="931.0,438.0 979.4,414.0 993.0,421.0 945.0,445.0" fill="#f4f6f6" fill-opacity="1" />
<polygon points="931.0,438.0 945.0,445.0 945.0,455.0 931.0,448.0" fill="#d6dee0" fill-opacity="1" />
<polygon points="945.0,445.0 993.0,421.0 993.0,431.0 945.0,455.0" fill="#e3e9ea" fill-opacity="1" />
<polygon points="951.0,462.0 1034.0,419.0 1047.7,426.0 965.0,469.0" fill="#f4f6f6" fill-opacity="1" />
<polygon points="951.0,462.0 965.0,469.0 965.0,479.0 951.0,472.0" fill="#d6dee0" fill-opacity="1" />
<polygon points="965.0,469.0 1047.7,426.0 1047.7,436.0 965.0,479.0" fill="#e3e9ea" fill-opacity="1" />
<polygon points="917.0,438.0 922.0,435.0 927.0,438.0 922.0,441.0" fill="#c6dde2" fill-opacity="1" />
<polygon points="917.0,438.0 922.0,441.0 922.0,447.0 917.0,444.0" fill="#9fc0c7" fill-opacity="1" />
<polygon points="922.0,441.0 927.0,438.0 927.0,444.0 922.0,447.0" fill="#b3d0d6" fill-opacity="1" />
<polygon points="843.0,433.0 870.0,420.0 882.0,426.0 855.0,440.0" fill="#f0f4f5" fill-opacity="1" />
<polygon points="843.0,433.0 855.0,440.0 855.0,442.0 843.0,435.0" fill="#cfdade" fill-opacity="1" />
<polygon points="855.0,440.0 882.0,426.0 882.0,428.0 855.0,442.0" fill="#dde6e9" fill-opacity="1" />
<g stroke="#b8c8d0" stroke-width="1.6"><path d="M856 442V480M880 428V466M845 435V458"/></g>
<polygon points="853.0,418.0 867.0,412.0 868.0,426.0 854.0,432.0" fill="#dbe8ec" fill-opacity="1" stroke="#8aa5ae" stroke-width="0.9" stroke-opacity="1" stroke-linejoin="round" />
<polygon points="854.0,432.0 868.0,426.0 873.0,429.0 859.0,435.0" fill="#c8d6dc" fill-opacity="1" />
<polygon points="1002.0,462.0 1018.0,455.0 1032.0,462.0 1016.0,470.0" fill="#f2f5f5" fill-opacity="1" />
<ellipse cx="850" cy="386" rx="18" ry="5" fill="#6d7c84" opacity=".16"/>
<g stroke="#b7c7d2" stroke-width="1.6"><path d="M826 356 823 382M842 358 845 382M834 358V380"/></g>
<polygon points="822.0,354.0 840.0,352.0 846.0,357.0 828.0,360.0" fill="#c7d4de" fill-opacity="1" />
<path d="M830 349 853 351Q860 353 859 360L862 382 857 383 852 361 832 359Z" fill="#283148"/>
<path d="M841 353 858 356Q866 358 865 365L867 385 862 386 859 366 845 362Z" fill="#283148"/>
<path d="M856 380 864 384 858 385Z M860 384 866 388 861 389Z" fill="#262c3a"/>
<path d="M829 330Q837 326 845 330L847 352 831 353Z" fill="#e0604f"/>
<path d="M843 334 854 342 853 345 842 339Z" fill="#f0b597"/>
<polygon points="853.0,336.0 862.0,330.0 864.0,337.0 855.0,343.0" fill="#e7eff2" fill-opacity="1" stroke="#b3c6cf" stroke-width="0.6" stroke-opacity="1" stroke-linejoin="round" />
<circle cx="838" cy="320" r="5" fill="#f0b597"/><path d="M832 319Q833 312 839 313 845 314 843 319 838 316 832 319Z" fill="#1e2638"/><circle cx="835" cy="312" r="2.8" fill="#1e2638"/>
<ellipse cx="948" cy="401" rx="14" ry="4" fill="#6d7c84" opacity=".16"/>
<path d="M939 353H955L954 396H949L947 365 945 396H940Z" fill="#283148"/>
<path d="M938 399 946 396 946 401 938 402Z M946 399 953 396 955 401 948 403Z" fill="#262c3a"/>
<path d="M938 328Q947 323 956 328L955 355H939Z" fill="#f5f5f5"/>
<path d="M938 329 935 340 939 342 941 332ZM954 329 958 340 955 344Z" fill="#e0604f"/>
<path d="M957 330 961 333 960 347 956 345Z" fill="#7896a0"/>
<path d="M938 331 929 322 926 324 935 336Z" fill="#f0b597"/>
<polygon points="936.0,337.0 950.0,340.0 951.0,346.0 937.0,344.0" fill="#7fa4b5" fill-opacity="1" />
<circle cx="948" cy="319" r="5" fill="#f0b597"/><path d="M942 322Q941 311 948 311 955 311 954 322L953 328 951 318Q946 315 944 320L943 326Z" fill="#1e2638"/>
<ellipse cx="756" cy="472" rx="15" ry="4" fill="#6d7c84" opacity=".16"/>
<path d="M745 433H764L763 471H757L755 445 752 471H746Z" fill="#283148"/>
<path d="M744 470 752 469 752 474 744 475Z M755 470 763 469 764 474 756 476Z" fill="#262c3a"/>
<path d="M743 403Q754 396 765 404L766 436H744Z" fill="#e0604f"/>
<path d="M762 406 775 410 782 405 784 408 776 416 763 414Z" fill="#e0604f"/>
<polygon points="770.0,397.0 785.0,401.0 786.0,414.0 771.0,410.0" fill="#e9f0f2" fill-opacity="1" stroke="#9fb8c2" stroke-width="0.8" stroke-opacity="1" stroke-linejoin="round" />
<path d="M738 405Q746 400 755 405L757 431Q748 436 739 431Z" fill="#4f6a86"/>
<path d="M742 414H752M742 423H752" stroke="#dbe4ec" stroke-width="1.3"/>
<path d="M747 387Q747 380 754 380 761 380 761 388L761 402 748 402Z" fill="#1e2638"/>
<ellipse cx="834" cy="486" rx="18" ry="5" fill="#6d7c84" opacity=".16"/>
<g stroke="#3c4658" stroke-width="1.4"><path d="M832 473 817 478M832 473 848 479M832 473 834 487M832 473 823 485M832 473 842 486"/></g>
<path d="M832 460V474" stroke="#8a99a6" stroke-width="2"/>
<polygon points="814.0,452.0 836.0,446.0 846.0,456.0 822.0,462.0" fill="#d8e2ea" fill-opacity="1" />
<polygon points="810.0,432.0 822.0,437.0 823.0,461.0 813.0,457.0" fill="#c3d1dc" fill-opacity="1" />
<path d="M833 440 855 446 866 466 860 470 849 456 836 458Z" fill="#283148"/>
<path d="M858 468 868 465 869 471 860 473Z" fill="#262c3a"/>
<path d="M824 420Q835 414 846 422L849 448 828 452Z" fill="#f5f5f5"/>
<path d="M842 425 853 430 858 428 859 431 852 435 840 431Z" fill="#f0b597"/>
<path d="M826 412Q826 401 836 401 845 401 845 411 844 417 838 418 829 418 826 412Z" fill="#1e2638"/><circle cx="829" cy="405" r="3.5" fill="#1e2638"/>
<ellipse cx="1040" cy="508" rx="18" ry="5" fill="#6d7c84" opacity=".16"/>
<g stroke="#3c4658" stroke-width="1.4"><path d="M1045 500 1033 504M1045 500 1058 505M1045 500 1046 514M1045 500 1038 512"/></g>
<polygon points="1040.0,482.0 1060.0,476.0 1066.0,486.0 1046.0,492.0" fill="#d8e2ea" fill-opacity="1" />
<polygon points="1052.0,466.0 1066.0,462.0 1066.0,488.0 1052.0,494.0" fill="#c8d5de" fill-opacity="1" />
<path d="M1040 474 1024 475 1019 503 1025 504 1030 484 1045 486Z" fill="#283148"/>
<path d="M1016 503 1026 502 1027 508 1018 508Z" fill="#262c3a"/>
<path d="M1024 447Q1040 440 1053 450L1054 482 1030 484Z" fill="#e0604f"/>
<path d="M1030 452 1016 463 1012 461 1014 466 1031 462Z" fill="#e0604f"/>
<polygon points="1006.0,452.0 1018.0,447.0 1021.0,458.0 1009.0,463.0" fill="#e6eff1" fill-opacity="1" stroke="#9ab3bd" stroke-width="0.8" stroke-opacity="1" stroke-linejoin="round" />
<circle cx="1036" cy="441" r="4.5" fill="#f0b597"/><path d="M1031 436Q1033 428 1041 429 1047 431 1046 438 1044 442 1040 442 1036 437 1031 438Z" fill="#1e2638"/>
</g><!--/illus-->
<!-- selection -->
<rect x="677.3" y="140.3" width="439.5" height="439.7" fill="none" stroke="#1fb496" stroke-opacity=".55" stroke-width="1.4"/>
<g fill="#fff" stroke="#b8b8b8" stroke-width=".8">
<circle cx="677" cy="140.3" r="3.6"/><circle cx="1117" cy="140.3" r="3.6"/><circle cx="677" cy="580" r="3.6"/><circle cx="1117" cy="580" r="3.6"/>
<rect x="892" y="138.4" width="10" height="3.8" rx="1.9"/><rect x="892" y="578.1" width="10" height="3.8" rx="1.9"/>
<rect x="675.1" y="355" width="3.8" height="10" rx="1.9"/><rect x="1115.1" y="355" width="3.8" height="10" rx="1.9"/>
<circle cx="897" cy="123" r="7.3"/>
</g>
<path d="M896.2 120.1A3 3 0 0 0 895.4 125.6M897.8 125.9A3 3 0 0 0 898.6 120.4" fill="none" stroke="#2a2a2a" stroke-width="1.25"/><path d="M894.2 124.6 896.6 126.6 894.9 127.2ZM899.8 121.4 897.4 119.4 899.1 118.8Z" fill="#2a2a2a"/>
<path d="M1109.5 187.7H1119.5" stroke="#222" stroke-width="1"/><path d="M1109 187.7 1112 185.4V190ZM1120 187.7 1117 185.4V190Z" fill="#111"/>
</svg>



<!-- floating toolbar -->
<div class="a" style="left:373px;top:39px;width:561px;height:23px;background:#1c1c1c;border-radius:4px"></div>
<svg style="left:378px;top:43px" width="15" height="15" viewBox="0 0 15 15"><circle cx="7.5" cy="7.5" r="6.6" fill="#242424" stroke="#2e2e2e" stroke-width="1"/><path d="M3 4 12 11M12 4 3 11M7.5 1V14" stroke="#2c2c2c" stroke-width="1"/></svg>
<svg style="left:398px;top:43px" width="15" height="15" viewBox="0 0 15 15"><circle cx="7.5" cy="7.5" r="5.2" fill="none" stroke="#dadada" stroke-width="3.6"/></svg>
<svg style="left:418px;top:44px" width="13" height="13" viewBox="0 0 13 13"><g fill="#d8d8d8"><rect x="0" y="0" width="3" height="3"/><rect x="6" y="0" width="3" height="3"/><rect x="3" y="3" width="3" height="3"/><rect x="9" y="3" width="3" height="3"/><rect x="0" y="6" width="3" height="3"/><rect x="6" y="6" width="3" height="3"/><rect x="3" y="9" width="3" height="3"/><rect x="9" y="9" width="3" height="3" fill="#777"/></g></svg>
<div class="sep" style="left:435px;top:44px;height:13px;background:#2c2c2c"></div>
<svg style="left:445px;top:46px" width="10" height="10" viewBox="0 0 10 10"><path d="M.8 9.2 6 4" stroke="#d4d4d4" stroke-width="1.4" stroke-linecap="round"/><path d="M6.5 .5V2M5.7 1.3H7.3M9 3V4.5M8.2 3.7H9.8M3.2 1.5V2.7M2.6 2.1H3.8" stroke="#d4d4d4" stroke-width=".8"/></svg>
<div class="t tbt" style="left:459px;top:46px">AI Image</div>
<svg style="left:512px;top:46px" width="9" height="9" viewBox="0 0 9 9"><path d="M4.5 6V1M2.3 3.1 4.5 .9 6.7 3.1M.7 6.3V8.2H8.3V6.3" fill="none" stroke="#d4d4d4" stroke-width="1.2"/></svg>
<div class="t tbt" style="left:526px;top:46px">Upload</div>
<svg style="left:569px;top:45px" width="10" height="11" viewBox="0 0 10 11"><path d="M1.5 5.5A3.5 3.5 0 0 1 7.6 3.2M8.5 5.5A3.5 3.5 0 0 1 2.4 7.8" fill="none" stroke="#d4d4d4" stroke-width="1.2"/><path d="M6.4 1.5 8.2 3.5 6 4M3.6 9.5 1.8 7.5 4 7" fill="#d4d4d4"/></svg>
<svg style="left:592px;top:45px" width="10" height="10" viewBox="0 0 10 10"><rect x=".6" y=".6" width="8.8" height="8.8" fill="none" stroke="#d4d4d4" stroke-width="1" stroke-dasharray="1.2 .8"/><circle cx="5" cy="4" r="1.6" fill="#d4d4d4"/><path d="M2 9.4C2.3 7.2 3.6 6.3 5 6.3S7.7 7.2 8 9.4Z" fill="#d4d4d4"/></svg>
<div class="t tbt" style="left:607px;top:46px">Remove BG</div>
<svg style="left:667px;top:45px" width="10" height="11" viewBox="0 0 10 11"><path d="M5 .5V10.5" stroke="#d4d4d4" stroke-width="1"/><path d="M4 1.5H1V9.5H4Z" fill="none" stroke="#d4d4d4" stroke-width="1.1"/><path d="M6 1.5H9V9.5H6Z" fill="#d4d4d4" opacity=".6"/></svg>
<svg style="left:686px;top:45px" width="11" height="10" viewBox="0 0 11 10"><path d="M.5 5H10.5" stroke="#d4d4d4" stroke-width="1.1"/><path d="M1.5 4V1H9.5V4M1.5 6V9H9.5V6" fill="none" stroke="#d4d4d4" stroke-width="1.1"/></svg>
<svg style="left:707px;top:46px" width="9" height="9" viewBox="0 0 9 9"><path d="M.6 3V.6H3M6 .6H8.4V3M8.4 6V8.4H6M3 8.4H.6V6" fill="none" stroke="#d4d4d4" stroke-width="1.2"/></svg>
<svg style="left:727px;top:45px" width="9" height="10" viewBox="0 0 9 10"><path d="M4.5 .5V6.3M2.3 4.1 4.5 6.3 6.7 4.1M.6 6.6V9H8.4V6.6" fill="none" stroke="#d4d4d4" stroke-width="1.2"/></svg>
<div class="sep" style="left:743px;top:44px;height:13px;background:#2c2c2c"></div>
<svg style="left:749px;top:45px" width="8" height="10" viewBox="0 0 8 10"><path d="M4 .8C2.5 3 1 4.6 1 6.3A3 3 0 0 0 7 6.3C7 4.6 5.5 3 4 .8Z" fill="none" stroke="#d4d4d4" stroke-width="1.1"/></svg>
<svg style="left:768px;top:45px" width="9" height="10" viewBox="0 0 9 10"><rect x="2.8" y=".6" width="5.6" height="7" fill="none" stroke="#d4d4d4" stroke-width="1.1"/><path d="M.6 2.4V9.4H6.4" fill="none" stroke="#d4d4d4" stroke-width="1.1"/></svg>
<svg style="left:789px;top:45px" width="8" height="10" viewBox="0 0 8 10"><path d="M.3 1.8H7.7M2.8 1.8V.6H5.2V1.8M1.2 2.2 1.6 9.4H6.4L6.8 2.2" fill="none" stroke="#d4d4d4" stroke-width="1.1"/><path d="M3 4V8M5 4V8" stroke="#d4d4d4" stroke-width=".7"/></svg>
<div class="sep" style="left:804px;top:44px;height:13px;background:#2c2c2c"></div>
<svg style="left:812px;top:45px" width="11" height="11" viewBox="0 0 12 12"><g transform="rotate(-40 6 6)"><rect x=".8" y="3.2" width="10.4" height="5.6" rx="2.8" fill="none" stroke="#d4d4d4" stroke-width="1.2"/><path d="M3.8 3.4V8.6M6 3.2V8.8M8.2 3.4V8.6" stroke="#d4d4d4" stroke-width=".9"/></g></svg>
<div class="t tbt" style="left:827px;top:46px">Animate</div>
<div class="sep" style="left:872px;top:44px;height:13px;background:#2c2c2c"></div>
<svg style="left:877px;top:45px" width="10" height="10" viewBox="0 0 10 10"><path d="M5 .6 9.4 3 5 5.4 .6 3Z" fill="none" stroke="#d4d4d4" stroke-width="1"/><path d="M.6 5 5 7.4 9.4 5M.6 7 5 9.4 9.4 7" fill="none" stroke="#d4d4d4" stroke-width="1"/></svg>
<svg style="left:899px;top:49px" width="9" height="3" viewBox="0 0 9 3"><circle cx="1.2" cy="1.5" r="1" fill="#d4d4d4"/><circle cx="4.5" cy="1.5" r="1" fill="#d4d4d4"/><circle cx="7.8" cy="1.5" r="1" fill="#d4d4d4"/></svg>
<div class="a" style="left:913.5px;top:41px;width:18.5px;height:18.5px;background:#353535;border-radius:4px"></div>
<svg style="left:918px;top:46px" width="10" height="9" viewBox="0 0 10 9"><path d="M.5 2H4.5M7.5 2H9.5M.5 7H2.5M5.5 7H9.5" stroke="#d4d4d4" stroke-width="1"/><circle cx="6" cy="2" r="1.4" fill="none" stroke="#d4d4d4" stroke-width="1"/><circle cx="4" cy="7" r="1.4" fill="none" stroke="#d4d4d4" stroke-width="1"/></svg>

<!-- right panel -->
<svg style="left:1298px;top:41px" width="14" height="13" viewBox="0 0 14 13"><path d="M7 .8C3.4.8.8 3.3.8 6.5S3 12.2 5.6 12.2C6.8 12.2 6.8 11.2 6.4 10.4S6.4 8.6 7.8 8.6H10C11.8 8.6 13.2 7.4 13.2 5.6 13.2 2.8 10.4.8 7 .8Z" fill="none" stroke="#22b896" stroke-width="1.3"/><circle cx="4" cy="5.8" r=".9" fill="#22b896"/><circle cx="6" cy="3.4" r=".9" fill="#22b896"/><circle cx="9" cy="3.6" r=".9" fill="#22b896"/></svg>
<div class="a" style="left:1297.6px;top:59.4px;width:14.6px;height:1.7px;background:#1fa986"></div>
<div class="a" style="left:1266px;top:61.3px;width:234px;height:1px;background:#282828"></div>
<svg style="left:1377px;top:40px" width="12" height="13" viewBox="0 0 12 13"><path d="M4.5 7V2.3a1.2 1.2 0 0 1 2.4 0V6.2H9.6A1.6 1.6 0 0 1 11.2 7.8V10.4A1.9 1.9 0 0 1 9.3 12.3H6.2L3.2 9.6 4.5 8.4" fill="none" stroke="#dcdcdc" stroke-width="1.2" stroke-linejoin="round"/><path d="M2.8 4.2A3 3 0 0 1 8.6 3.4" fill="none" stroke="#dcdcdc" stroke-width="1"/></svg>
<svg style="left:1455px;top:41px" width="13" height="12" viewBox="0 0 13 12"><path d="M.7.7H12.3V9H10.4V11.2L8.6 9H.7Z" fill="none" stroke="#dcdcdc" stroke-width="1.2" stroke-linejoin="round"/><path d="M3 3.3H10M3 5H10M3 6.7H10" stroke="#dcdcdc" stroke-width=".9"/></svg>
<div class="a" style="left:1493.5px;top:62px;width:6.5px;height:592px;background:#1c1c1c"></div>
<svg style="left:1493px;top:63px" width="7" height="6" viewBox="0 0 7 6"><path d="M3.5 1 6.2 5H.8Z" fill="#9a9a9a"/></svg>
<div class="a" style="left:1494px;top:72px;width:5px;height:156px;background:#4c4c4c;border-radius:2.5px"></div>
<svg style="left:1493px;top:646px" width="7" height="6" viewBox="0 0 7 6"><path d="M3.5 5 6.2 1H.8Z" fill="#9a9a9a"/></svg>

<div class="t rph" style="left:1271px;top:71.7px">Size &amp; Position</div>
<svg style="left:1475px;top:72.7px" width="7" height="4" viewBox="0 0 7 4"><path d="M.5.5H6.5L3.5 3.6Z" fill="#e0e0e0"/></svg>
<div class="t rpl" style="left:1283.5px;top:95.1px">Mode</div>
<div class="a ib" style="left:1406.6px;top:87.4px;width:58.8px;height:20.7px"></div>
<div class="t rpv" style="left:1413px;top:95.1px">Absolute</div>
<svg style="left:1453px;top:97px" width="7" height="4" viewBox="0 0 7 4"><path d="M.5.5H6.5L3.5 3.6Z" fill="#e0e0e0"/></svg>
<svg style="left:1472px;top:94.1px" width="8" height="8" viewBox="0 0 8 8"><path d="M5.6 1.4A3.2 3.2 0 1 1 2 1.6" fill="none" stroke="#e4e4e4" stroke-width="1.1"/><path d="M1 .4H3.6V2.9Z" fill="#e4e4e4"/></svg>
<div class="t rpl" style="left:1283.5px;top:121.8px">Left</div>
<div class="a ib" style="left:1424.7px;top:114.6px;width:40.7px;height:20.7px"></div>
<div class="t rpv" style="left:1431.0px;top:121.8px">670</div>
<svg style="left:1472px;top:120.8px" width="8" height="8" viewBox="0 0 8 8"><path d="M5.6 1.4A3.2 3.2 0 1 1 2 1.6" fill="none" stroke="#e4e4e4" stroke-width="1.1"/><path d="M1 .4H3.6V2.9Z" fill="#e4e4e4"/></svg>
<div class="t rpl" style="left:1283.5px;top:148.6px">Top</div>
<div class="a ib" style="left:1424.7px;top:141.4px;width:40.7px;height:20.7px"></div>
<div class="t rpv" style="left:1431.0px;top:148.6px">89</div>
<svg style="left:1472px;top:147.6px" width="8" height="8" viewBox="0 0 8 8"><path d="M5.6 1.4A3.2 3.2 0 1 1 2 1.6" fill="none" stroke="#e4e4e4" stroke-width="1.1"/><path d="M1 .4H3.6V2.9Z" fill="#e4e4e4"/></svg>
<div class="t rpl" style="left:1283.5px;top:175.8px">Right</div>
<div class="a ib" style="left:1424.7px;top:168.6px;width:40.7px;height:20.7px"></div>
<svg style="left:1472px;top:174.8px" width="8" height="8" viewBox="0 0 8 8"><path d="M5.6 1.4A3.2 3.2 0 1 1 2 1.6" fill="none" stroke="#e4e4e4" stroke-width="1.1"/><path d="M1 .4H3.6V2.9Z" fill="#e4e4e4"/></svg>
<div class="t rpl" style="left:1283.5px;top:202.8px">Bottom</div>
<div class="a ib" style="left:1424.7px;top:195.6px;width:40.7px;height:20.7px"></div>
<svg style="left:1472px;top:201.8px" width="8" height="8" viewBox="0 0 8 8"><path d="M5.6 1.4A3.2 3.2 0 1 1 2 1.6" fill="none" stroke="#e4e4e4" stroke-width="1.1"/><path d="M1 .4H3.6V2.9Z" fill="#e4e4e4"/></svg>
<div class="t rpl" style="left:1283.5px;top:230.0px">Width</div>
<div class="a ib" style="left:1424.7px;top:222.8px;width:40.7px;height:20.7px"></div>
<div class="t rpv" style="left:1431.0px;top:230.0px">550</div>
<svg style="left:1472px;top:229.0px" width="8" height="8" viewBox="0 0 8 8"><path d="M5.6 1.4A3.2 3.2 0 1 1 2 1.6" fill="none" stroke="#e4e4e4" stroke-width="1.1"/><path d="M1 .4H3.6V2.9Z" fill="#e4e4e4"/></svg>
<div class="t rpl" style="left:1283.5px;top:256.8px">Height</div>
<div class="a ib" style="left:1424.7px;top:249.6px;width:40.7px;height:20.7px"></div>
<div class="t rpv" style="left:1431.0px;top:256.8px">550</div>
<svg style="left:1472px;top:255.8px" width="8" height="8" viewBox="0 0 8 8"><path d="M5.6 1.4A3.2 3.2 0 1 1 2 1.6" fill="none" stroke="#e4e4e4" stroke-width="1.1"/><path d="M1 .4H3.6V2.9Z" fill="#e4e4e4"/></svg>
<div class="t rpl" style="left:1283.5px;top:283.8px">Padding</div>
<div class="a ib" style="left:1424.7px;top:276.6px;width:40.7px;height:20.7px"></div>
<div class="t rpv" style="left:1431.0px;top:283.8px">0</div>
<svg style="left:1472px;top:282.8px" width="8" height="8" viewBox="0 0 8 8"><path d="M5.6 1.4A3.2 3.2 0 1 1 2 1.6" fill="none" stroke="#5e5e5e" stroke-width="1.1"/><path d="M1 .4H3.6V2.9Z" fill="#5e5e5e"/></svg>
<div class="t rpl" style="left:1283.5px;top:310.8px">Margin</div>
<div class="a ib" style="left:1424.7px;top:303.6px;width:40.7px;height:20.7px"></div>
<div class="t rpv" style="left:1431.0px;top:310.8px">0</div>
<svg style="left:1472px;top:309.8px" width="8" height="8" viewBox="0 0 8 8"><path d="M5.6 1.4A3.2 3.2 0 1 1 2 1.6" fill="none" stroke="#5e5e5e" stroke-width="1.1"/><path d="M1 .4H3.6V2.9Z" fill="#5e5e5e"/></svg>
<div class="t rpl" style="left:1283.5px;top:338.3px">Horizontal Align</div>
<div class="a ib" style="left:1383.4px;top:330.5px;width:82px;height:21.5px"></div>
<svg style="left:1390px;top:337px" width="10" height="9" viewBox="0 0 10 9"><path d="M.8 0V9M9.2 0V9M5 2V7" stroke="#d8d8d8" stroke-width="1"/></svg>
<svg style="left:1410px;top:337px" width="10" height="9" viewBox="0 0 10 9"><path d="M.8 0V9M2 2.5H9M2 6H6.5" stroke="#d8d8d8" stroke-width="1"/></svg>
<svg style="left:1430px;top:337px" width="10" height="9" viewBox="0 0 10 9"><path d="M5 0V9M1 2.5H9M2.2 6H7.8" stroke="#d8d8d8" stroke-width="1"/></svg>
<svg style="left:1450px;top:337px" width="10" height="9" viewBox="0 0 10 9"><path d="M9.2 0V9M1 2.5H8M3.5 6H8" stroke="#d8d8d8" stroke-width="1"/></svg>
<svg style="left:1472px;top:337.3px" width="8" height="8" viewBox="0 0 8 8"><path d="M5.6 1.4A3.2 3.2 0 1 1 2 1.6" fill="none" stroke="#5e5e5e" stroke-width="1.1"/><path d="M1 .4H3.6V2.9Z" fill="#5e5e5e"/></svg>
<div class="t rpl" style="left:1283.5px;top:366.8px">Grow</div>
<div class="a" style="left:1352px;top:369.3px;width:61px;height:1.6px;background:#3a3a3a;border-radius:1px"></div>
<div class="a" style="left:1352px;top:369.2px;width:7px;height:1.8px;background:#1fb894;border-radius:1px"></div>
<div class="a" style="left:1354.9px;top:366.4px;width:7.4px;height:7.4px;background:#fff;border-radius:50%"></div>
<div class="a ib" style="left:1424.7px;top:359.6px;width:40.7px;height:20.7px"></div>
<div class="t rpv" style="left:1431.0px;top:366.8px">1</div>
<svg style="left:1472px;top:365.8px" width="8" height="8" viewBox="0 0 8 8"><path d="M5.6 1.4A3.2 3.2 0 1 1 2 1.6" fill="none" stroke="#5e5e5e" stroke-width="1.1"/><path d="M1 .4H3.6V2.9Z" fill="#5e5e5e"/></svg>
<div class="t rpl" style="left:1283.5px;top:395.1px">Shrink</div>
<div class="a ib" style="left:1424.7px;top:387.9px;width:40.7px;height:20.7px"></div>
<div class="t rpv" style="left:1431.0px;top:395.1px">1</div>
<svg style="left:1472px;top:394.1px" width="8" height="8" viewBox="0 0 8 8"><path d="M5.6 1.4A3.2 3.2 0 1 1 2 1.6" fill="none" stroke="#5e5e5e" stroke-width="1.1"/><path d="M1 .4H3.6V2.9Z" fill="#5e5e5e"/></svg>
<div class="t rpl" style="left:1283.5px;top:421.8px">Base</div>
<div class="a ib" style="left:1424.7px;top:414.6px;width:40.7px;height:20.7px"></div>
<div class="t rpv" style="left:1431.0px;top:421.8px">0</div>
<svg style="left:1472px;top:420.8px" width="8" height="8" viewBox="0 0 8 8"><path d="M5.6 1.4A3.2 3.2 0 1 1 2 1.6" fill="none" stroke="#5e5e5e" stroke-width="1.1"/><path d="M1 .4H3.6V2.9Z" fill="#5e5e5e"/></svg>
<div class="t rpl" style="left:1283.5px;top:443.4px">Clip Path</div>
<div class="a ib" style="left:1283.5px;top:454px;width:181.5px;height:48.5px"></div>
<svg style="left:1472px;top:474.8px" width="8" height="8" viewBox="0 0 8 8"><path d="M5.6 1.4A3.2 3.2 0 1 1 2 1.6" fill="none" stroke="#5e5e5e" stroke-width="1.1"/><path d="M1 .4H3.6V2.9Z" fill="#5e5e5e"/></svg>
<div class="t rph" style="left:1271px;top:522.5px">Fill &amp; Border</div>
<svg style="left:1475px;top:523.5px" width="7" height="4" viewBox="0 0 7 4"><path d="M.5.5H6.5L3.5 3.6Z" fill="#e0e0e0"/></svg>
<div class="t rpl" style="left:1283.5px;top:544.6px">Fill Color</div>
<div class="a ib" style="left:1437px;top:540px;width:28.4px;height:14px;border-radius:3px"></div>
<div class="a" style="left:1440.6px;top:543.6px;width:21.7px;height:7.7px;background:#fff;border-radius:1px"></div>
<svg style="left:1472px;top:543.6px" width="8" height="8" viewBox="0 0 8 8"><path d="M5.6 1.4A3.2 3.2 0 1 1 2 1.6" fill="none" stroke="#5e5e5e" stroke-width="1.1"/><path d="M1 .4H3.6V2.9Z" fill="#5e5e5e"/></svg>
<div class="t rpl" style="left:1283.5px;top:570.2px">Border</div>
<div class="a ib" style="left:1419.5px;top:562.7px;width:45.9px;height:20.8px"></div>
<div class="t rpv" style="left:1426px;top:570.2px">None</div>
<svg style="left:1453px;top:572px" width="7" height="4" viewBox="0 0 7 4"><path d="M.5.5H6.5L3.5 3.6Z" fill="#e0e0e0"/></svg>
<svg style="left:1472px;top:569.2px" width="8" height="8" viewBox="0 0 8 8"><path d="M5.6 1.4A3.2 3.2 0 1 1 2 1.6" fill="none" stroke="#5e5e5e" stroke-width="1.1"/><path d="M1 .4H3.6V2.9Z" fill="#5e5e5e"/></svg>
<div class="t rph" style="left:1271px;top:603.0px">Transform</div>
<svg style="left:1475px;top:604.0px" width="7" height="4" viewBox="0 0 7 4"><path d="M.5.5H6.5L3.5 3.6Z" fill="#e0e0e0"/></svg>
<div class="t rpl" style="left:1283.5px;top:626.0px">Perspective</div>
<div class="a ib" style="left:1424.7px;top:618.8px;width:40.7px;height:20.7px"></div>
<div class="t rpv" style="left:1431.0px;top:626.0px">0</div>
<svg style="left:1472px;top:625.0px" width="8" height="8" viewBox="0 0 8 8"><path d="M5.6 1.4A3.2 3.2 0 1 1 2 1.6" fill="none" stroke="#5e5e5e" stroke-width="1.1"/><path d="M1 .4H3.6V2.9Z" fill="#5e5e5e"/></svg>
<div class="a ib" style="left:1424.7px;top:645.3px;width:40.7px;height:20.7px"></div>
<div class="t rpv" style="left:1431px;top:651.8px">0</div>
<svg style="left:1472px;top:651.8px" width="8" height="8" viewBox="0 0 8 8"><path d="M5.6 1.4A3.2 3.2 0 1 1 2 1.6" fill="none" stroke="#5e5e5e" stroke-width="1.1"/><path d="M1 .4H3.6V2.9Z" fill="#5e5e5e"/></svg>
<div class="a" style="left:1266px;top:654px;width:234px;height:30px;background:#1e1e1e"></div>

<!-- bottom: thumbnails -->
<div class="a" style="left:45px;top:656px;width:76.5px;height:46px;border:2.4px solid #1b8266;border-radius:5.5px;background:#111"></div>
<div class="a" style="left:47.9px;top:658.6px;width:71px;height:40.6px;background:#fff;border-radius:3px;overflow:hidden">
 <div class="t" style="left:2.2px;top:15.3px;font-size:2.9px;font-weight:bold;color:#d9793a;line-height:3.6px">The Power of AI in<br>eLearning</div>
 <div class="a" style="left:2.2px;top:22.8px;width:28px;height:.7px;background:#c4c4c4"></div>
 <div class="a" style="left:2.2px;top:24px;width:8px;height:.7px;background:#d0d0d0"></div>
 <div class="t" style="left:5.2px;top:31.2px;font-size:5.6px;color:#4a4a4a">1</div>
 <div class="a" style="left:36px;top:3.4px;width:33px;height:33px;border-radius:50%;background:#f39a5c"></div>
 <div class="a" style="left:37.9px;top:5.2px;width:29.6px;height:29.6px;border-radius:50%;background:linear-gradient(135deg,#ebe6da,#d3dcda 55%,#c7d5d8)"></div>
 <div class="a" style="left:42px;top:10px;width:7px;height:6px;background:#f3f5f4;opacity:.7"></div>
 <div class="a" style="left:55px;top:9px;width:7px;height:7px;background:#f3f5f4;opacity:.7"></div>
 <div class="a" style="left:60px;top:17px;width:6px;height:6px;background:#f3f5f4;opacity:.7"></div>
 <div class="a" style="left:48.5px;top:17px;width:1.6px;height:4px;background:#d96b55"></div>
 <div class="a" style="left:54px;top:16.5px;width:1.5px;height:4.5px;background:#4b556a"></div>
 <div class="a" style="left:42.5px;top:22px;width:1.8px;height:5px;background:#4b556a"></div>
 <div class="a" style="left:50px;top:24px;width:2px;height:3px;background:#e9e9e9"></div>
 <div class="a" style="left:59.5px;top:24.5px;width:1.8px;height:4.5px;background:#d96b55"></div>
 <div class="a" style="left:41px;top:19px;width:3px;height:3px;background:#5b8f96;border-radius:50%"></div>
 <div class="a" style="left:51.5px;top:27.5px;width:3px;height:3px;background:#5b8f96;border-radius:50%"></div>
 <div class="a" style="left:61.5px;top:22.5px;width:3px;height:3px;background:#5b8f96;border-radius:50%"></div>
</div>
<div class="a" style="left:129px;top:659px;width:70.3px;height:40px;background:#fff;border-radius:3px;overflow:hidden;border-top:1px solid #b9b9b9">
 <div class="t" style="left:1.5px;top:15.7px;font-size:3.1px;font-weight:bold;color:#cf6a2a;line-height:3.9px;text-align:center;width:27px">The Power of<br>AI in eLearning</div>
 <div class="t" style="left:3.8px;top:30.8px;font-size:5.8px;color:#2a2a2a">2</div>
 <div class="a" style="left:27.6px;top:0;width:.6px;height:40px;background:#f6dccb"></div>
 <div class="a" style="left:28.2px;top:1px;width:41px;height:8px;background:#fdf3ec"></div>
 <div class="a" style="left:28.2px;top:10px;width:41px;height:8px;background:#fdf3ec"></div>
 <div class="a" style="left:28.2px;top:19px;width:41px;height:8px;background:#fdf3ec"></div>
 <div class="a" style="left:28.2px;top:28px;width:41px;height:8px;background:#fdf3ec"></div>
 <div class="a" style="left:29px;top:1.7px;width:3.2px;height:3.2px;background:#ee8440;border-radius:.5px"></div>
 <div class="a" style="left:29px;top:10.7px;width:3.2px;height:3.2px;background:#ee8440;border-radius:.5px"></div>
 <div class="a" style="left:29px;top:19.7px;width:3.2px;height:3.2px;background:#ee8440;border-radius:.5px"></div>
 <div class="a" style="left:29px;top:28.7px;width:3.2px;height:3.2px;background:#ee8440;border-radius:.5px"></div>
 <div class="a" style="left:33.5px;top:2px;width:11px;height:.6px;background:#8a7a70"></div>
 <div class="a" style="left:33.5px;top:3.6px;width:33px;height:.5px;background:#b9aca4"></div>
 <div class="a" style="left:33.5px;top:5px;width:30px;height:.5px;background:#c6bab2"></div>
 <div class="a" style="left:33.5px;top:11px;width:11px;height:.6px;background:#8a7a70"></div>
 <div class="a" style="left:33.5px;top:12.6px;width:33px;height:.5px;background:#b9aca4"></div>
 <div class="a" style="left:33.5px;top:14px;width:30px;height:.5px;background:#c6bab2"></div>
 <div class="a" style="left:33.5px;top:20px;width:11px;height:.6px;background:#8a7a70"></div>
 <div class="a" style="left:33.5px;top:21.6px;width:33px;height:.5px;background:#b9aca4"></div>
 <div class="a" style="left:33.5px;top:23px;width:24px;height:.5px;background:#c6bab2"></div>
 <div class="a" style="left:33.5px;top:29px;width:11px;height:.6px;background:#8a7a70"></div>
 <div class="a" style="left:33.5px;top:30.6px;width:33px;height:.5px;background:#b9aca4"></div>
</div>
<div class="a" style="left:208.8px;top:658px;width:71.2px;height:41px;border:1px solid #262626;border-radius:4px"></div>
<svg style="left:239px;top:673px" width="10" height="10" viewBox="0 0 10 10"><path d="M5 .5V9.5M.5 5H9.5" stroke="#d8d8d8" stroke-width="1.2"/></svg>
<!-- timeline button -->
<div class="a" style="left:47.5px;top:706px;width:60.5px;height:18px;background:#393939;border-radius:4.5px"></div>
<svg style="left:55.5px;top:710.8px" width="9" height="9" viewBox="0 0 9 9"><rect x=".6" y=".6" width="7.8" height="7.8" rx=".8" fill="none" stroke="#d6d6d6" stroke-width="1.1"/><path d="M2 2.6H4.2V4.4H6.8V6.6" fill="none" stroke="#bdbdbd" stroke-width="1"/></svg>
<div class="t" style="left:70px;top:711.2px;font-size:7.7px;color:#d6d6d6">Timeline</div>
<!-- timecode -->
<div class="t" style="left:732px;top:711.4px;font-size:7.8px;color:#e8e8e8;font-weight:bold;letter-spacing:-.2px">00:00:00</div>
<div class="a" style="left:763.5px;top:707px;width:16px;height:16px;border-radius:50%;background:#fff"></div>
<svg style="left:768px;top:711px" width="8" height="8" viewBox="0 0 8 8"><path d="M2 1 6.6 4 2 7Z" fill="none" stroke="#2a2f3a" stroke-width="1.2" stroke-linejoin="round"/></svg>
<div class="t" style="left:782.7px;top:711.4px;font-size:7.8px;color:#7c7c7c;letter-spacing:-.2px">00:04:77</div>
<div class="t" style="left:1321px;top:711.4px;font-size:7.8px;color:#d0d0d0">Page 1/2</div>
<div class="a" style="left:1365px;top:714.2px;width:72px;height:1.6px;background:#333;border-radius:1px"></div>
<div class="a" style="left:1365px;top:714px;width:19px;height:2px;background:#1fb894;border-radius:1px"></div>
<div class="a" style="left:1380.3px;top:711.3px;width:7.4px;height:7.4px;background:#fff;border-radius:50%"></div>
<div class="t" style="left:1452px;top:711.4px;font-size:7.8px;color:#d0d0d0">136%</div>
<svg style="left:1481px;top:710px" width="10" height="10" viewBox="0 0 10 10"><path d="M.6 3V.6H3M7 .6H9.4V3M9.4 7V9.4H7M3 9.4H.6V7" fill="none" stroke="#d0d0d0" stroke-width="1"/><rect x="2.8" y="3.2" width="4.4" height="3.6" fill="none" stroke="#d0d0d0" stroke-width="1"/></svg>
<div class="a" style="left:42px;top:726.2px;width:1458px;height:1px;background:#2a2a2a"></div>

<div class="t" style="left:45.9px;top:731px;font-size:8.6px;color:#e0e0e0">Animations</div>
<svg style="left:184px;top:731px" width="7" height="8" viewBox="0 0 7 8"><path d="M3.5 .5V7.5M0 4H7" stroke="#d8d8d8" stroke-width="1.2"/></svg>
<svg style="left:196.5px;top:731px" width="8" height="9" viewBox="0 0 8 9"><path d="M.5 1.8H7.5M2.8 1.8V.7H5.2V1.8M1.3 2.2 1.7 8.3H6.3L6.7 2.2Z" fill="none" stroke="#5a5a5a" stroke-width=".9"/><path d="M3.2 3.5V7M4.8 3.5V7" stroke="#5a5a5a" stroke-width=".6"/></svg>
<div class="a" style="left:42px;top:757.3px;width:1458px;height:13.7px;background:#282828"></div>
<div class="a" style="left:42px;top:744px;width:1458px;height:1px;background:#252525"></div>
<div class="a" style="left:42px;top:757.3px;width:1458px;height:1px;background:#252525"></div>
<div class="a" style="left:42px;top:771px;width:1458px;height:1px;background:#252525"></div>
<div class="a" style="left:42px;top:784.5px;width:1458px;height:1px;background:#252525"></div>
<div class="a" style="left:42px;top:798px;width:1458px;height:1px;background:#252525"></div>
<div class="a" style="left:42px;top:811.2px;width:1458px;height:1px;background:#252525"></div>
<div class="t" style="left:48.5px;top:747.4px;font-size:7.4px;color:#cfcfcf">Content 22</div>
<div class="t" style="left:48.5px;top:761.0px;font-size:7.4px;color:#cfcfcf">Image 23</div>
<div class="t" style="left:48.5px;top:774.2px;font-size:7.4px;color:#cfcfcf">Group 19</div>
<div class="t" style="left:60.3px;top:787.9px;font-size:7.4px;color:#cfcfcf">Title 20</div>
<div class="t" style="left:60.3px;top:801.5px;font-size:7.4px;color:#cfcfcf">Subtitle 21</div>
<svg style="left:197px;top:747px" width="7" height="8" viewBox="0 0 7 8"><path d="M1.8 3.6V2.4a1.7 1.7 0 0 1 3.4 0V3.6" fill="none" stroke="#aaa" stroke-width=".9"/><rect x=".7" y="3.6" width="5.6" height="3.9" rx=".6" fill="none" stroke="#aaa" stroke-width=".9"/></svg>
<div class="a" style="left:207.3px;top:727px;width:1px;height:85px;background:#262626"></div>
<svg style="left:0;top:0" width="1500" height="844" viewBox="0 0 1500 844"><g><path d="M213.30 738V744.5" stroke="#9a9a9a" stroke-width="1"/><path d="M219.16 741V744.5" stroke="#5e5e5e" stroke-width=".8"/><path d="M225.02 741V744.5" stroke="#5e5e5e" stroke-width=".8"/><path d="M230.89 741V744.5" stroke="#5e5e5e" stroke-width=".8"/><path d="M236.75 741V744.5" stroke="#5e5e5e" stroke-width=".8"/><path d="M242.61 738V744.5" stroke="#9a9a9a" stroke-width="1"/><path d="M248.47 741V744.5" stroke="#5e5e5e" stroke-width=".8"/><path d="M254.33 741V744.5" stroke="#5e5e5e" stroke-width=".8"/><path d="M260.20 741V744.5" stroke="#5e5e5e" stroke-width=".8"/><path d="M266.06 741V744.5" stroke="#5e5e5e" stroke-width=".8"/><path d="M271.92 738V744.5" stroke="#9a9a9a" stroke-width="1"/><path d="M277.78 741V744.5" stroke="#5e5e5e" stroke-width=".8"/><path d="M283.64 741V744.5" stroke="#5e5e5e" stroke-width=".8"/><path d="M289.51 741V744.5" stroke="#5e5e5e" stroke-width=".8"/><path d="M295.37 741V744.5" stroke="#5e5e5e" stroke-width=".8"/><path d="M301.23 738V744.5" stroke="#9a9a9a" stroke-width="1"/><path d="M307.09 741V744.5" stroke="#5e5e5e" stroke-width=".8"/><path d="M312.95 741V744.5" stroke="#5e5e5e" stroke-width=".8"/><path d="M318.82 741V744.5" stroke="#5e5e5e" stroke-width=".8"/><path d="M324.68 741V744.5" stroke="#5e5e5e" stroke-width=".8"/><path d="M330.54 738V744.5" stroke="#9a9a9a" stroke-width="1"/><path d="M336.40 741V744.5" stroke="#5e5e5e" stroke-width=".8"/><path d="M342.26 741V744.5" stroke="#5e5e5e" stroke-width=".8"/><path d="M348.13 741V744.5" stroke="#5e5e5e" stroke-width=".8"/><path d="M353.99 741V744.5" stroke="#5e5e5e" stroke-width=".8"/><path d="M359.85 738V744.5" stroke="#9a9a9a" stroke-width="1"/><path d="M365.71 741V744.5" stroke="#5e5e5e" stroke-width=".8"/><path d="M371.57 741V744.5" stroke="#5e5e5e" stroke-width=".8"/><path d="M377.44 741V744.5" stroke="#5e5e5e" stroke-width=".8"/><path d="M383.30 741V744.5" stroke="#5e5e5e" stroke-width=".8"/><path d="M389.16 738V744.5" stroke="#9a9a9a" stroke-width="1"/><path d="M395.02 741V744.5" stroke="#5e5e5e" stroke-width=".8"/><path d="M400.88 741V744.5" stroke="#5e5e5e" stroke-width=".8"/><path d="M406.75 741V744.5" stroke="#5e5e5e" stroke-width=".8"/><path d="M412.61 741V744.5" stroke="#5e5e5e" stroke-width=".8"/><path d="M418.47 738V744.5" stroke="#9a9a9a" stroke-width="1"/><path d="M424.33 741V744.5" stroke="#5e5e5e" stroke-width=".8"/><path d="M430.19 741V744.5" stroke="#5e5e5e" stroke-width=".8"/><path d="M436.06 741V744.5" stroke="#5e5e5e" stroke-width=".8"/><path d="M441.92 741V744.5" stroke="#5e5e5e" stroke-width=".8"/><path d="M447.78 738V744.5" stroke="#9a9a9a" stroke-width="1"/><path d="M453.64 741V744.5" stroke="#5e5e5e" stroke-width=".8"/><path d="M459.50 741V744.5" stroke="#5e5e5e" stroke-width=".8"/><path d="M465.37 741V744.5" stroke="#5e5e5e" stroke-width=".8"/><path d="M471.23 741V744.5" stroke="#5e5e5e" stroke-width=".8"/><path d="M477.09 738V744.5" stroke="#9a9a9a" stroke-width="1"/><path d="M482.95 741V744.5" stroke="#5e5e5e" stroke-width=".8"/><path d="M488.81 741V744.5" stroke="#5e5e5e" stroke-width=".8"/><path d="M494.68 741V744.5" stroke="#5e5e5e" stroke-width=".8"/><path d="M500.54 741V744.5" stroke="#5e5e5e" stroke-width=".8"/><path d="M506.40 738V744.5" stroke="#9a9a9a" stroke-width="1"/><path d="M512.26 741V744.5" stroke="#5e5e5e" stroke-width=".8"/><path d="M518.12 741V744.5" stroke="#5e5e5e" stroke-width=".8"/><path d="M523.99 741V744.5" stroke="#5e5e5e" stroke-width=".8"/><path d="M529.85 741V744.5" stroke="#5e5e5e" stroke-width=".8"/><path d="M535.71 738V744.5" stroke="#9a9a9a" stroke-width="1"/><path d="M541.57 741V744.5" stroke="#5e5e5e" stroke-width=".8"/><path d="M547.43 741V744.5" stroke="#5e5e5e" stroke-width=".8"/><path d="M553.30 741V744.5" stroke="#5e5e5e" stroke-width=".8"/><path d="M559.16 741V744.5" stroke="#5e5e5e" stroke-width=".8"/><path d="M565.02 738V744.5" stroke="#9a9a9a" stroke-width="1"/><path d="M570.88 741V744.5" stroke="#5e5e5e" stroke-width=".8"/><path d="M576.74 741V744.5" stroke="#5e5e5e" stroke-width=".8"/><path d="M582.61 741V744.5" stroke="#5e5e5e" stroke-width=".8"/><path d="M588.47 741V744.5" stroke="#5e5e5e" stroke-width=".8"/><path d="M594.33 738V744.5" stroke="#9a9a9a" stroke-width="1"/><path d="M600.19 741V744.5" stroke="#5e5e5e" stroke-width=".8"/><path d="M606.05 741V744.5" stroke="#5e5e5e" stroke-width=".8"/><path d="M611.92 741V744.5" stroke="#5e5e5e" stroke-width=".8"/><path d="M617.78 741V744.5" stroke="#5e5e5e" stroke-width=".8"/><path d="M623.64 738V744.5" stroke="#9a9a9a" stroke-width="1"/><path d="M629.50 741V744.5" stroke="#5e5e5e" stroke-width=".8"/><path d="M635.36 741V744.5" stroke="#5e5e5e" stroke-width=".8"/><path d="M641.23 741V744.5" stroke="#5e5e5e" stroke-width=".8"/><path d="M647.09 741V744.5" stroke="#5e5e5e" stroke-width=".8"/><path d="M652.95 738V744.5" stroke="#9a9a9a" stroke-width="1"/><path d="M658.81 741V744.5" stroke="#5e5e5e" stroke-width=".8"/><path d="M664.67 741V744.5" stroke="#5e5e5e" stroke-width=".8"/><path d="M670.54 741V744.5" stroke="#5e5e5e" stroke-width=".8"/><path d="M676.40 741V744.5" stroke="#5e5e5e" stroke-width=".8"/><path d="M682.26 738V744.5" stroke="#9a9a9a" stroke-width="1"/><path d="M688.12 741V744.5" stroke="#5e5e5e" stroke-width=".8"/><path d="M693.98 741V744.5" stroke="#5e5e5e" stroke-width=".8"/><path d="M699.85 741V744.5" stroke="#5e5e5e" stroke-width=".8"/><path d="M705.71 741V744.5" stroke="#5e5e5e" stroke-width=".8"/><path d="M711.57 738V744.5" stroke="#9a9a9a" stroke-width="1"/><path d="M717.43 741V744.5" stroke="#5e5e5e" stroke-width=".8"/><path d="M723.29 741V744.5" stroke="#5e5e5e" stroke-width=".8"/><path d="M729.16 741V744.5" stroke="#5e5e5e" stroke-width=".8"/><path d="M735.02 741V744.5" stroke="#5e5e5e" stroke-width=".8"/><path d="M740.88 738V744.5" stroke="#9a9a9a" stroke-width="1"/><path d="M746.74 741V744.5" stroke="#5e5e5e" stroke-width=".8"/><path d="M752.60 741V744.5" stroke="#5e5e5e" stroke-width=".8"/><path d="M758.47 741V744.5" stroke="#5e5e5e" stroke-width=".8"/><path d="M764.33 741V744.5" stroke="#5e5e5e" stroke-width=".8"/><path d="M770.19 738V744.5" stroke="#9a9a9a" stroke-width="1"/><path d="M776.05 741V744.5" stroke="#5e5e5e" stroke-width=".8"/><path d="M781.91 741V744.5" stroke="#5e5e5e" stroke-width=".8"/><path d="M787.78 741V744.5" stroke="#5e5e5e" stroke-width=".8"/><path d="M793.64 741V744.5" stroke="#5e5e5e" stroke-width=".8"/><path d="M799.50 738V744.5" stroke="#9a9a9a" stroke-width="1"/><path d="M805.36 741V744.5" stroke="#5e5e5e" stroke-width=".8"/><path d="M811.22 741V744.5" stroke="#5e5e5e" stroke-width=".8"/><path d="M817.09 741V744.5" stroke="#5e5e5e" stroke-width=".8"/><path d="M822.95 741V744.5" stroke="#5e5e5e" stroke-width=".8"/><path d="M828.81 738V744.5" stroke="#9a9a9a" stroke-width="1"/><path d="M834.67 741V744.5" stroke="#5e5e5e" stroke-width=".8"/><path d="M840.53 741V744.5" stroke="#5e5e5e" stroke-width=".8"/><path d="M846.40 741V744.5" stroke="#5e5e5e" stroke-width=".8"/><path d="M852.26 741V744.5" stroke="#5e5e5e" stroke-width=".8"/><path d="M858.12 738V744.5" stroke="#9a9a9a" stroke-width="1"/><path d="M863.98 741V744.5" stroke="#5e5e5e" stroke-width=".8"/><path d="M869.84 741V744.5" stroke="#5e5e5e" stroke-width=".8"/><path d="M875.71 741V744.5" stroke="#5e5e5e" stroke-width=".8"/><path d="M881.57 741V744.5" stroke="#5e5e5e" stroke-width=".8"/><path d="M887.43 738V744.5" stroke="#9a9a9a" stroke-width="1"/><path d="M893.29 741V744.5" stroke="#5e5e5e" stroke-width=".8"/><path d="M899.15 741V744.5" stroke="#5e5e5e" stroke-width=".8"/><path d="M905.02 741V744.5" stroke="#5e5e5e" stroke-width=".8"/><path d="M910.88 741V744.5" stroke="#5e5e5e" stroke-width=".8"/><path d="M916.74 738V744.5" stroke="#9a9a9a" stroke-width="1"/><path d="M922.60 741V744.5" stroke="#5e5e5e" stroke-width=".8"/><path d="M928.46 741V744.5" stroke="#5e5e5e" stroke-width=".8"/><path d="M934.33 741V744.5" stroke="#5e5e5e" stroke-width=".8"/><path d="M940.19 741V744.5" stroke="#5e5e5e" stroke-width=".8"/><path d="M946.05 738V744.5" stroke="#9a9a9a" stroke-width="1"/><path d="M951.91 741V744.5" stroke="#5e5e5e" stroke-width=".8"/><path d="M957.77 741V744.5" stroke="#5e5e5e" stroke-width=".8"/><path d="M963.64 741V744.5" stroke="#5e5e5e" stroke-width=".8"/><path d="M969.50 741V744.5" stroke="#5e5e5e" stroke-width=".8"/><path d="M975.36 738V744.5" stroke="#9a9a9a" stroke-width="1"/><path d="M981.22 741V744.5" stroke="#5e5e5e" stroke-width=".8"/><path d="M987.08 741V744.5" stroke="#5e5e5e" stroke-width=".8"/><path d="M992.95 741V744.5" stroke="#5e5e5e" stroke-width=".8"/><path d="M998.81 741V744.5" stroke="#5e5e5e" stroke-width=".8"/><path d="M1004.67 738V744.5" stroke="#9a9a9a" stroke-width="1"/><path d="M1010.53 741V744.5" stroke="#5e5e5e" stroke-width=".8"/><path d="M1016.39 741V744.5" stroke="#5e5e5e" stroke-width=".8"/><path d="M1022.26 741V744.5" stroke="#5e5e5e" stroke-width=".8"/><path d="M1028.12 741V744.5" stroke="#5e5e5e" stroke-width=".8"/><path d="M1033.98 738V744.5" stroke="#9a9a9a" stroke-width="1"/><path d="M1039.84 741V744.5" stroke="#5e5e5e" stroke-width=".8"/><path d="M1045.70 741V744.5" stroke="#5e5e5e" stroke-width=".8"/><path d="M1051.57 741V744.5" stroke="#5e5e5e" stroke-width=".8"/><path d="M1057.43 741V744.5" stroke="#5e5e5e" stroke-width=".8"/><path d="M1063.29 738V744.5" stroke="#9a9a9a" stroke-width="1"/><path d="M1069.15 741V744.5" stroke="#5e5e5e" stroke-width=".8"/><path d="M1075.01 741V744.5" stroke="#5e5e5e" stroke-width=".8"/><path d="M1080.88 741V744.5" stroke="#5e5e5e" stroke-width=".8"/><path d="M1086.74 741V744.5" stroke="#5e5e5e" stroke-width=".8"/><path d="M1092.60 738V744.5" stroke="#9a9a9a" stroke-width="1"/><path d="M1098.46 741V744.5" stroke="#5e5e5e" stroke-width=".8"/><path d="M1104.32 741V744.5" stroke="#5e5e5e" stroke-width=".8"/><path d="M1110.19 741V744.5" stroke="#5e5e5e" stroke-width=".8"/><path d="M1116.05 741V744.5" stroke="#5e5e5e" stroke-width=".8"/><path d="M1121.91 738V744.5" stroke="#9a9a9a" stroke-width="1"/><path d="M1127.77 741V744.5" stroke="#5e5e5e" stroke-width=".8"/><path d="M1133.63 741V744.5" stroke="#5e5e5e" stroke-width=".8"/><path d="M1139.50 741V744.5" stroke="#5e5e5e" stroke-width=".8"/><path d="M1145.36 741V744.5" stroke="#5e5e5e" stroke-width=".8"/><path d="M1151.22 738V744.5" stroke="#9a9a9a" stroke-width="1"/><path d="M1157.08 741V744.5" stroke="#5e5e5e" stroke-width=".8"/><path d="M1162.94 741V744.5" stroke="#5e5e5e" stroke-width=".8"/><path d="M1168.81 741V744.5" stroke="#5e5e5e" stroke-width=".8"/><path d="M1174.67 741V744.5" stroke="#5e5e5e" stroke-width=".8"/><path d="M1180.53 738V744.5" stroke="#9a9a9a" stroke-width="1"/><path d="M1186.39 741V744.5" stroke="#5e5e5e" stroke-width=".8"/><path d="M1192.25 741V744.5" stroke="#5e5e5e" stroke-width=".8"/><path d="M1198.12 741V744.5" stroke="#5e5e5e" stroke-width=".8"/><path d="M1203.98 741V744.5" stroke="#5e5e5e" stroke-width=".8"/><path d="M1209.84 738V744.5" stroke="#9a9a9a" stroke-width="1"/><path d="M1215.70 741V744.5" stroke="#5e5e5e" stroke-width=".8"/><path d="M1221.56 741V744.5" stroke="#5e5e5e" stroke-width=".8"/><path d="M1227.43 741V744.5" stroke="#5e5e5e" stroke-width=".8"/><path d="M1233.29 741V744.5" stroke="#5e5e5e" stroke-width=".8"/><path d="M1239.15 738V744.5" stroke="#9a9a9a" stroke-width="1"/><path d="M1245.01 741V744.5" stroke="#5e5e5e" stroke-width=".8"/><path d="M1250.87 741V744.5" stroke="#5e5e5e" stroke-width=".8"/><path d="M1256.74 741V744.5" stroke="#5e5e5e" stroke-width=".8"/><path d="M1262.60 741V744.5" stroke="#5e5e5e" stroke-width=".8"/><path d="M1268.46 738V744.5" stroke="#9a9a9a" stroke-width="1"/><path d="M1274.32 741V744.5" stroke="#5e5e5e" stroke-width=".8"/><path d="M1280.18 741V744.5" stroke="#5e5e5e" stroke-width=".8"/><path d="M1286.05 741V744.5" stroke="#5e5e5e" stroke-width=".8"/><path d="M1291.91 741V744.5" stroke="#5e5e5e" stroke-width=".8"/><path d="M1297.77 738V744.5" stroke="#9a9a9a" stroke-width="1"/><path d="M1303.63 741V744.5" stroke="#5e5e5e" stroke-width=".8"/><path d="M1309.49 741V744.5" stroke="#5e5e5e" stroke-width=".8"/><path d="M1315.36 741V744.5" stroke="#5e5e5e" stroke-width=".8"/><path d="M1321.22 741V744.5" stroke="#5e5e5e" stroke-width=".8"/><path d="M1327.08 738V744.5" stroke="#9a9a9a" stroke-width="1"/><path d="M1332.94 741V744.5" stroke="#5e5e5e" stroke-width=".8"/><path d="M1338.80 741V744.5" stroke="#5e5e5e" stroke-width=".8"/><path d="M1344.67 741V744.5" stroke="#5e5e5e" stroke-width=".8"/><path d="M1350.53 741V744.5" stroke="#5e5e5e" stroke-width=".8"/><path d="M1356.39 738V744.5" stroke="#9a9a9a" stroke-width="1"/><path d="M1362.25 741V744.5" stroke="#5e5e5e" stroke-width=".8"/><path d="M1368.11 741V744.5" stroke="#5e5e5e" stroke-width=".8"/><path d="M1373.98 741V744.5" stroke="#5e5e5e" stroke-width=".8"/><path d="M1379.84 741V744.5" stroke="#5e5e5e" stroke-width=".8"/><path d="M1385.70 738V744.5" stroke="#9a9a9a" stroke-width="1"/><path d="M1391.56 741V744.5" stroke="#5e5e5e" stroke-width=".8"/><path d="M1397.42 741V744.5" stroke="#5e5e5e" stroke-width=".8"/><path d="M1403.29 741V744.5" stroke="#5e5e5e" stroke-width=".8"/><path d="M1409.15 741V744.5" stroke="#5e5e5e" stroke-width=".8"/><path d="M1415.01 738V744.5" stroke="#9a9a9a" stroke-width="1"/><path d="M1420.87 741V744.5" stroke="#5e5e5e" stroke-width=".8"/><path d="M1426.73 741V744.5" stroke="#5e5e5e" stroke-width=".8"/><path d="M1432.60 741V744.5" stroke="#5e5e5e" stroke-width=".8"/><path d="M1438.46 741V744.5" stroke="#5e5e5e" stroke-width=".8"/><path d="M1444.32 738V744.5" stroke="#9a9a9a" stroke-width="1"/><path d="M1450.18 741V744.5" stroke="#5e5e5e" stroke-width=".8"/><path d="M1456.04 741V744.5" stroke="#5e5e5e" stroke-width=".8"/><path d="M1461.91 741V744.5" stroke="#5e5e5e" stroke-width=".8"/><path d="M1467.77 741V744.5" stroke="#5e5e5e" stroke-width=".8"/><path d="M1473.63 738V744.5" stroke="#9a9a9a" stroke-width="1"/><path d="M1479.49 741V744.5" stroke="#5e5e5e" stroke-width=".8"/><path d="M1485.35 741V744.5" stroke="#5e5e5e" stroke-width=".8"/><path d="M1491.22 741V744.5" stroke="#5e5e5e" stroke-width=".8"/><path d="M1497.08 741V744.5" stroke="#5e5e5e" stroke-width=".8"/></g><g font-family="Liberation Sans" font-size="6px" fill="#bdbdbd"><text x="242.61" y="734.5" text-anchor="middle">0.5</text><text x="271.92" y="734.5" text-anchor="middle">1</text><text x="301.23" y="734.5" text-anchor="middle">1.5</text><text x="330.54" y="734.5" text-anchor="middle">2</text><text x="359.85" y="734.5" text-anchor="middle">2.5</text><text x="389.16" y="734.5" text-anchor="middle">3</text><text x="418.47" y="734.5" text-anchor="middle">3.5</text><text x="447.78" y="734.5" text-anchor="middle">4</text><text x="477.09" y="734.5" text-anchor="middle">4.5</text><text x="506.40" y="734.5" text-anchor="middle">5</text><text x="535.71" y="734.5" text-anchor="middle">5.5</text><text x="565.02" y="734.5" text-anchor="middle">6</text><text x="594.33" y="734.5" text-anchor="middle">6.5</text><text x="623.64" y="734.5" text-anchor="middle">7</text><text x="652.95" y="734.5" text-anchor="middle">7.5</text><text x="682.26" y="734.5" text-anchor="middle">8</text><text x="711.57" y="734.5" text-anchor="middle">8.5</text><text x="740.88" y="734.5" text-anchor="middle">9</text><text x="770.19" y="734.5" text-anchor="middle">9.5</text><text x="799.50" y="734.5" text-anchor="middle">10</text><text x="828.81" y="734.5" text-anchor="middle">10.5</text><text x="858.12" y="734.5" text-anchor="middle">11</text><text x="887.43" y="734.5" text-anchor="middle">11.5</text><text x="916.74" y="734.5" text-anchor="middle">12</text><text x="946.05" y="734.5" text-anchor="middle">12.5</text><text x="975.36" y="734.5" text-anchor="middle">13</text><text x="1004.67" y="734.5" text-anchor="middle">13.5</text><text x="1033.98" y="734.5" text-anchor="middle">14</text><text x="1063.29" y="734.5" text-anchor="middle">14.5</text><text x="1092.60" y="734.5" text-anchor="middle">15</text><text x="1121.91" y="734.5" text-anchor="middle">15.5</text><text x="1151.22" y="734.5" text-anchor="middle">16</text><text x="1180.53" y="734.5" text-anchor="middle">16.5</text><text x="1209.84" y="734.5" text-anchor="middle">17</text><text x="1239.15" y="734.5" text-anchor="middle">17.5</text><text x="1268.46" y="734.5" text-anchor="middle">18</text><text x="1297.77" y="734.5" text-anchor="middle">18.5</text><text x="1327.08" y="734.5" text-anchor="middle">19</text><text x="1356.39" y="734.5" text-anchor="middle">19.5</text><text x="1385.70" y="734.5" text-anchor="middle">20</text><text x="1415.01" y="734.5" text-anchor="middle">20.5</text><text x="1444.32" y="734.5" text-anchor="middle">21</text><text x="1473.63" y="734.5" text-anchor="middle">21.5</text></g></svg>
<div class="a" style="left:213.9px;top:785.9px;width:116.8px;height:10.1px;background:#17a583;border-radius:1px"></div>
<div class="t" style="left:213.9px;top:789.3px;width:116.8px;text-align:center;font-size:5.8px;color:#e6f5ef">Zoom In</div>
<div class="a" style="left:376px;top:799.5px;width:117.3px;height:10.1px;background:#17a583;border-radius:1px"></div>
<div class="t" style="left:376px;top:802.9px;width:117.3px;text-align:center;font-size:5.8px;color:#e6f5ef">Swivel In</div>
<div class="a" style="left:212.8px;top:738px;width:1.2px;height:74px;background:#bfbfbf"></div>
<svg style="left:210px;top:732.3px" width="8" height="13" viewBox="0 0 8 13"><path d="M.9 3.6Q.9 .8 4 .8 7.1 .8 7.1 3.6V9.4L4 11.8.9 9.4Z" fill="#1e1e1e" stroke="#e6e6e6" stroke-width="1.3"/></svg>
<!-- sidebar -->
<svg style="left:16px;top:43px" width="11" height="11" viewBox="0 0 11 11"><rect x=".7" y=".7" width="9.6" height="9.6" fill="none" stroke="#e0e0e0" stroke-width="1.3"/><path d="M4.3 .7V10.3M4.3 5.3H10.3" stroke="#e0e0e0" stroke-width="1.3"/></svg>
<div class="side-l" style="top:61.5px">Design</div>
<svg style="left:16px;top:85px" width="10" height="10" viewBox="0 0 10 10"><path d="M.5 1.2H9.5M5 1.2V10" stroke="#e8e8e8" stroke-width="2.1"/></svg>
<div class="side-l" style="top:103.5px">Text</div>
<svg style="left:15px;top:127px" width="12" height="12" viewBox="0 0 12 12"><path d="M3 .7 5.2 4.6H.8Z" fill="none" stroke="#e0e0e0" stroke-width="1.1" stroke-linejoin="round"/><path d="M9 4.7 6.7 2.4A1.2 1.2 0 0 1 9 1.3 1.2 1.2 0 0 1 11.3 2.4Z" fill="none" stroke="#e0e0e0" stroke-width="1.1" stroke-linejoin="round"/><circle cx="3" cy="8.8" r="2" fill="none" stroke="#e0e0e0" stroke-width="1.1"/><rect x="7" y="6.8" width="4" height="4" fill="none" stroke="#e0e0e0" stroke-width="1.1"/></svg>
<div class="side-l" style="top:145.5px">Elements</div>
<svg style="left:15px;top:169px" width="13" height="12" viewBox="0 0 13 12"><rect x=".7" y=".7" width="8" height="7" fill="none" stroke="#e0e0e0" stroke-width="1.2"/><path d="M2.3 6.3 4 4.5 5.5 6 7.2 4" fill="none" stroke="#e0e0e0" stroke-width=".8"/><path d="M10.5 4V10.2" stroke="#e0e0e0" stroke-width="1.1"/><circle cx="9.4" cy="10.2" r="1.4" fill="#e0e0e0"/></svg>
<div class="side-l" style="top:187.5px">Media</div>
<svg style="left:15px;top:210px" width="12" height="12" viewBox="0 0 12 12"><rect x="3.2" y=".7" width="8" height="8" fill="none" stroke="#e0e0e0" stroke-width="1.2"/><path d="M.8 3V11.2H9" fill="none" stroke="#e0e0e0" stroke-width="1.1"/><path d="M6 3.6A1.3 1.3 0 1 1 7.5 4.9V5.9M7.5 6.8V7.4" fill="none" stroke="#e0e0e0" stroke-width=".9"/></svg>
<div class="side-l" style="top:229.5px">Questions</div>
<svg style="left:15px;top:252px" width="12" height="12" viewBox="0 0 12 12"><g transform="rotate(-40 6 6)"><rect x=".8" y="3.2" width="10.4" height="5.6" rx="2.8" fill="none" stroke="#e0e0e0" stroke-width="1.2"/><path d="M3.8 3.4V8.6M6 3.2V8.8M8.2 3.4V8.6" stroke="#e0e0e0" stroke-width=".9"/></g></svg>
<div class="side-l" style="top:271.5px">Animates</div>
<svg style="left:15px;top:295px" width="12" height="12" viewBox="0 0 12 12"><path d="M11 .8 5 6.6" stroke="#e0e0e0" stroke-width="1.8" stroke-linecap="round"/><path d="M4.2 6.8C2.6 6.8 2.2 8 2 9.2 1.9 10 1.2 10.4.7 10.6 2 11.4 5.4 11.2 5.4 8.3Z" fill="#e0e0e0"/></svg>
<div class="side-l" style="top:313.5px">Theme</div>
<svg style="left:15px;top:337px" width="12" height="12" viewBox="0 0 12 12"><rect x=".8" y=".8" width="10.4" height="10.4" fill="none" stroke="#e0e0e0" stroke-width="1.2"/><path d="M3.6 8.8V6.8M5.8 8.8V5.2M8.2 8.8V3.4" stroke="#e0e0e0" stroke-width="1.2"/></svg>
<div class="side-l" style="top:355.5px">Scores</div>
</body></html>
